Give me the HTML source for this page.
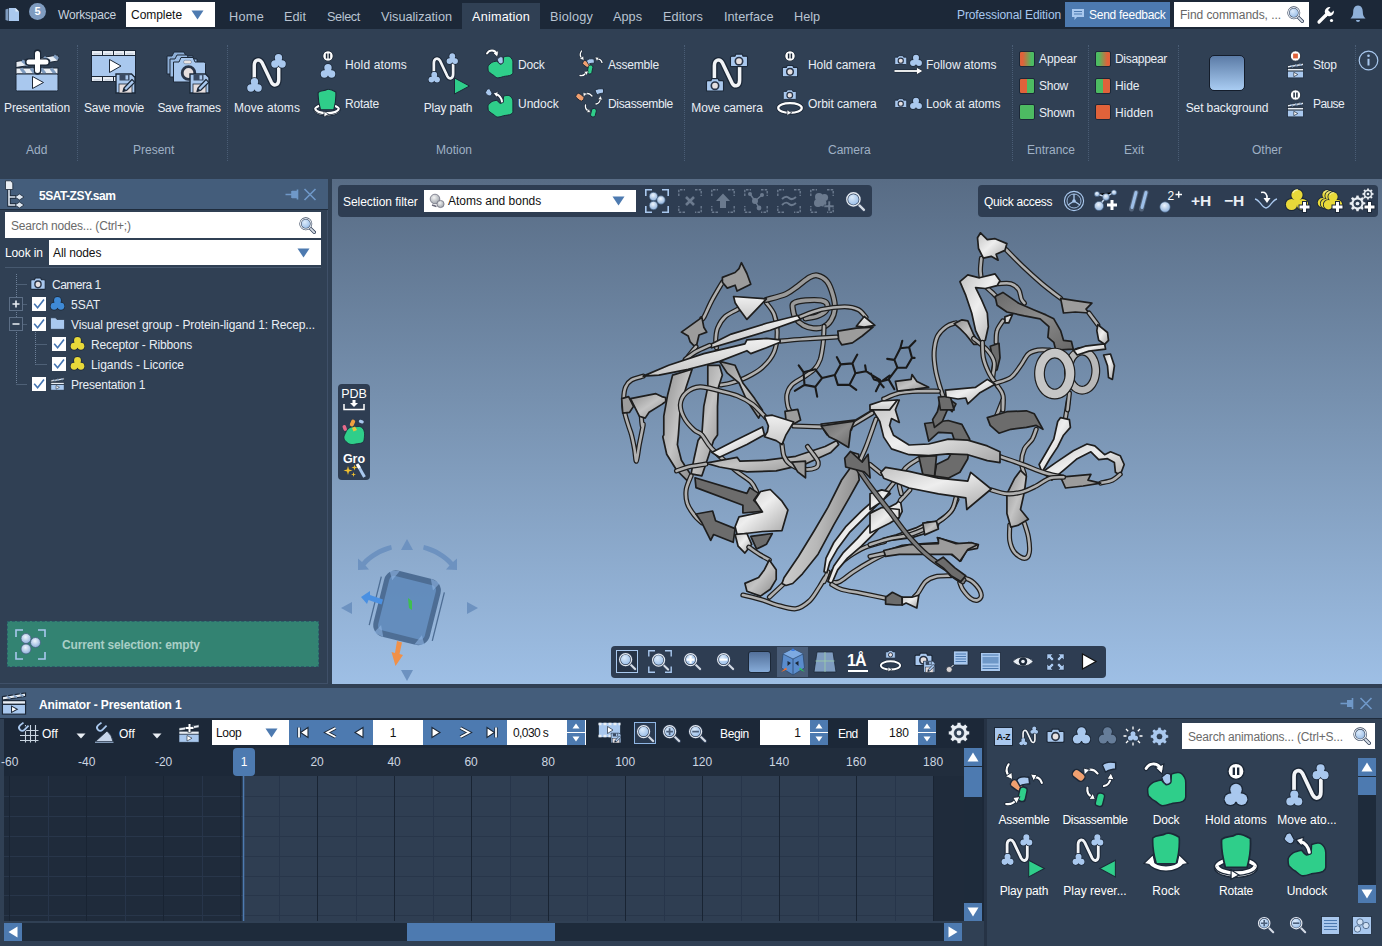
<!DOCTYPE html>
<html lang="en">
<head>
<meta charset="utf-8">
<title>SAMSON - 5SAT-ZSY.sam</title>
<style>
*{box-sizing:border-box;margin:0;padding:0}
html,body{width:1382px;height:946px;overflow:hidden;background:#304054}
body{position:relative;font-family:"Liberation Sans","DejaVu Sans",sans-serif;font-size:12px;color:#e9eef4;line-height:16px}
.a{position:absolute}
.t{position:absolute;white-space:nowrap;line-height:16px;height:16px}
.c{text-align:center}
.dim{color:#9fb0c4}
.b{font-weight:bold}
.dk{color:#111}
svg{position:absolute;overflow:visible}
.sep{position:absolute;width:0;border-left:1px dotted #4a5d75}
.wbox{position:absolute;background:#fff}
.mi{top:9px;font-size:12.7px;color:#b9c4d2}
.gl{top:142px}
.tb{background:#445d7b;border-bottom:1px solid #1f2c3d}
.bar{background:#2e3d52;border-radius:4px}
.sw{width:16px;height:16px;border-radius:2px;border:1px solid #1c2838}
</style>
</head>
<body>
<svg width="0" height="0" style="position:absolute">
<defs>
<linearGradient id="gbg" x1="0" y1="0" x2="0" y2="1"><stop offset="0" stop-color="#5b7ba6"/><stop offset="1" stop-color="#a9ccf2"/></linearGradient>
<linearGradient id="gap" x1="0" y1="0" x2="1" y2="0"><stop offset="0.15" stop-color="#e0623a"/><stop offset="0.85" stop-color="#4dbb62"/></linearGradient>
<linearGradient id="gdis" x1="0" y1="0" x2="1" y2="0"><stop offset="0.15" stop-color="#4dbb62"/><stop offset="0.85" stop-color="#e0623a"/></linearGradient>
<radialGradient id="glens" cx="0.4" cy="0.35" r="0.7"><stop offset="0" stop-color="#dcebfb"/><stop offset="1" stop-color="#8fb6e4"/></radialGradient>
<!-- atom trio 16x16 -->
<symbol id="trio" viewBox="0 0 16 16"><g fill="#1c2838" stroke="#1c2838" stroke-width="1.7" stroke-linejoin="round"><circle cx="8" cy="4.7" r="3.7"/><circle cx="4.4" cy="11" r="3.7"/><circle cx="11.600" cy="11" r="3.7"/><circle cx="8" cy="9" r="3.600"/></g><g fill="#a9c8ee"><circle cx="8" cy="4.7" r="3.7"/><circle cx="4.4" cy="11" r="3.7"/><circle cx="11.600" cy="11" r="3.7"/><circle cx="8" cy="9" r="3.600"/></g></symbol>
<symbol id="trioy" viewBox="0 0 16 16"><g fill="#1c2838" stroke="#1c2838" stroke-width="1.7" stroke-linejoin="round"><circle cx="8" cy="4.7" r="3.7"/><circle cx="4.4" cy="11" r="3.7"/><circle cx="11.600" cy="11" r="3.7"/><circle cx="8" cy="9" r="3.600"/></g><g fill="#e8d93a"><circle cx="8" cy="4.7" r="3.7"/><circle cx="4.4" cy="11" r="3.7"/><circle cx="11.600" cy="11" r="3.7"/><circle cx="8" cy="9" r="3.600"/></g></symbol>
<symbol id="triob" viewBox="0 0 16 16"><g fill="#1c2838" stroke="#1c2838" stroke-width="1.7" stroke-linejoin="round"><circle cx="8" cy="4.7" r="3.7"/><circle cx="4.4" cy="11" r="3.7"/><circle cx="11.600" cy="11" r="3.7"/><circle cx="8" cy="9" r="3.600"/></g><g fill="#3f8ad6"><circle cx="8" cy="4.7" r="3.7"/><circle cx="4.4" cy="11" r="3.7"/><circle cx="11.600" cy="11" r="3.7"/><circle cx="8" cy="9" r="3.600"/></g></symbol>
<!-- N path 24x30 -->
<symbol id="npath" viewBox="0 0 31 31"><path d="M4 27 V9 C4 3 9 2 11.5 6.5 L20 24.5 C22.5 29 27 27.5 27 22 V9" fill="none" stroke="#1c2838" stroke-width="5.6" stroke-linecap="round" stroke-linejoin="round"/><path d="M4 27 V9 C4 3 9 2 11.5 6.5 L20 24.5 C22.5 29 27 27.5 27 22 V9" fill="none" stroke="#f2f4f7" stroke-width="3.2" stroke-linecap="round" stroke-linejoin="round"/></symbol>
<!-- green blob 28x30 -->
<symbol id="blob" viewBox="0 0 27 24"><path d="M10 6 C7 6.5 5.5 7 4.3 7.8 C2 9.5 0.8 11 1 12.5 C1 14.5 1.2 15.5 1.5 16.3 C3 18 5 19.5 6.2 20 C8 21.5 9.5 23 10.9 22.9 C13 22.8 15 22 16.5 21.5 C19 21 22 21 24 20 C25.5 19 25.9 18 25.9 17.2 V7.8 C25.9 6 25.5 5 25 4.1 C24 2.5 22.5 1.2 21.2 1.2 C19.5 1 18 1.5 16.5 2.2 C16.5 4 16.3 6 16 7.8 C15 8.8 14 9.2 13.2 9.2 C12 8.5 11 7.5 10 6 Z" fill="#2fce8a" stroke="#1c2838" stroke-width="1"/></symbol>
<!-- rotate body (shield) 20x22 -->
<symbol id="shield" viewBox="0 0 20 22"><path d="M1.2 4 C4 1.5 7 3 10 1 C13 0 16 1.8 18.8 3.5 C19.2 9 18.5 15 16.8 21.2 H3.5 C1.8 15 0.8 9 1.2 4 Z" fill="#2fce8a" stroke="#1c2838" stroke-width="1.1"/></symbol>
<!-- camera 16x12 -->
<symbol id="cam" viewBox="0 0 16 12"><path d="M1.8 2.6 H4.6 L5.4 0.8 H10.6 L11.4 2.6 H14.2 A1 1 0 0 1 15.2 3.6 V10.4 A1 1 0 0 1 14.2 11.4 H1.8 A1 1 0 0 1 0.8 10.4 V3.6 A1 1 0 0 1 1.8 2.6 Z" fill="#a9c8ee" stroke="#1c2838" stroke-width="1"/><circle cx="8" cy="6.8" r="3.1" fill="#e6e0e0" stroke="#2a3548" stroke-width="1.4"/></symbol>
<!-- clapperboard 18x16 -->
<symbol id="clap" viewBox="0 0 18 16"><path d="M1 3.2 L17 0.6 V3 L1 5.6 Z" fill="#e9eef4" stroke="#1c2838" stroke-width="0.8"/><path d="M4 2.8 L6.5 4.6 M8.5 2 L11 3.9 M13 1.3 L15.5 3.2" stroke="#7f9cc0" stroke-width="1.3"/><rect x="1" y="6" width="16" height="2.6" fill="#e9eef4" stroke="#1c2838" stroke-width="0.8"/><rect x="1" y="8.6" width="16" height="6.8" fill="#a9c8ee" stroke="#1c2838" stroke-width="0.8"/><path d="M7.3 9.8 L11.3 12 L7.3 14.2 Z" fill="#fff" stroke="#1c2838" stroke-width="0.7"/></symbol>
<!-- magnifier 20x20 -->
<symbol id="mag" viewBox="0 0 20 20"><path d="M12.5 12.5 L18 18" stroke="#33425a" stroke-width="4" stroke-linecap="round"/><path d="M12.5 12.5 L18 18" stroke="#d6dde6" stroke-width="2.2" stroke-linecap="round"/><circle cx="8" cy="8" r="6.3" fill="url(#glens)" stroke="#33425a" stroke-width="2.6"/><circle cx="8" cy="8" r="6.3" fill="none" stroke="#e4eaf1" stroke-width="1.3"/></symbol>
<!-- pause circle 12x12 -->
<symbol id="pausec" viewBox="0 0 12 12"><circle cx="6" cy="6" r="5.2" fill="#fff" stroke="#1c2838" stroke-width="0.9"/><path d="M4.6 3.6 V8.4 M7.4 3.6 V8.4" stroke="#1c2838" stroke-width="1.5"/></symbol>
<symbol id="stopc" viewBox="0 0 12 12"><circle cx="6" cy="6" r="5.2" fill="#fff" stroke="#1c2838" stroke-width="0.9"/><rect x="3.6" y="3.6" width="4.8" height="4.8" fill="#e0623a"/></symbol>
<!-- orbit ring 28x14 -->
<symbol id="ring" viewBox="0 0 28 14"><ellipse cx="14" cy="6.5" rx="11.8" ry="4.8" fill="none" stroke="#1c2838" stroke-width="3.8"/><ellipse cx="14" cy="6.5" rx="11.8" ry="4.8" fill="none" stroke="#fff" stroke-width="2.2"/><path d="M11 8.3 L15.8 11.3 L11 14 Z" fill="#fff" stroke="#1c2838" stroke-width="0.7"/></symbol>
<!-- small curved arrow (white) 12x10 pointing right-down -->
<symbol id="carr" viewBox="0 0 12 10"><path d="M1 3 C4 0.5 8 1.5 9 6" fill="none" stroke="#1c2838" stroke-width="2.6" stroke-linecap="round"/><path d="M6 5.2 L9.6 9.4 L11.8 4.2 Z" fill="#fff" stroke="#1c2838" stroke-width="0.8"/><path d="M1 3 C4 0.5 8 1.5 9 6" fill="none" stroke="#fff" stroke-width="1.4" stroke-linecap="round"/></symbol>
<!-- small blue lump -->
<symbol id="lump" viewBox="0 0 8 9"><path d="M1 3.2 L4 0.8 C5.5 0.6 6.5 1 7 1.6 L7.3 6.5 C6.5 8 5 8.4 4 8.2 C2.5 7.5 1.5 6 1 3.2 Z" fill="#a9c8ee" stroke="#1c2838" stroke-width="0.8"/></symbol>
<!-- gear 20x20 -->
<symbol id="gear" viewBox="0 0 20 20"><g fill="#e9eef4" stroke="#1c2838" stroke-width="0.6"><path d="M8.4 0.8 H11.6 L12.1 3.3 L13.9 4.05 L16 2.6 L18.3 4.9 L16.85 7 L17.6 8.8 L20.1 9.3 V12.5 L17.6 13 L16.85 14.8 L18.3 16.9 L16 19.2 L13.9 17.75 L12.1 18.5 L11.6 21 H8.4 L7.9 18.5 L6.1 17.75 L4 19.2 L1.7 16.9 L3.15 14.8 L2.4 13 L-0.1 12.5 V9.3 L2.4 8.8 L3.15 7 L1.7 4.9 L4 2.6 L6.1 4.05 L7.9 3.3 Z" transform="translate(0.5,-0.4) scale(0.95)"/></g><circle cx="10" cy="10" r="4.4" fill="#304054" stroke="#1c2838" stroke-width="0.5"/><circle cx="10" cy="10" r="2.2" fill="#e9eef4"/></symbol>
<!-- floppy + pencil 21x21 -->
<symbol id="floppy" viewBox="0 0 21 21"><path d="M1 1 H16.5 L20 4.5 V20 H1 Z" fill="#a9c8ee" stroke="#1c2838" stroke-width="1.4"/><rect x="4.5" y="1.5" width="10" height="6" fill="#3a4a62"/><rect x="10.5" y="2.3" width="2.6" height="4.2" fill="#a9c8ee"/><rect x="4" y="11" width="13" height="9" fill="#e6dede" stroke="#1c2838" stroke-width="0.8"/><path d="M8 18.5 L9 15 L17 6.5 L19.8 9.3 L11.5 17.5 Z" fill="#a9c8ee" stroke="#1c2838" stroke-width="1.2" stroke-linejoin="round"/><path d="M8 18.5 L9 15 L11.5 17.5 Z" fill="#1c2838"/></symbol>
<!-- assemble 28x29 -->
<symbol id="asm" viewBox="0 0 28 29"><g stroke="#1c2838" stroke-width="0.9"><rect x="5.5" y="12.5" width="8" height="5" rx="2.2" fill="#f0a070" transform="rotate(35 9.5 15)"/><path d="M9.5 12 C10.5 9.5 14 9.5 17 10 L17.5 14 C15 14.5 13 14 11.5 15.5 Z" fill="#a9c8ee"/><rect x="10.8" y="16" width="4.6" height="9" rx="2" fill="#2fce8a" transform="rotate(12 13 20.5)"/></g><g fill="none" stroke="#1c2838" stroke-width="2.4" stroke-linecap="round"><path d="M4.5 2 C2.5 5 3 7.5 5 9.5"/><path d="M20 10.5 C22 9.5 24 10.5 25 13.5"/><path d="M3 26.5 C5.5 27 7.5 26 9 24"/></g><g fill="none" stroke="#fff" stroke-width="1.3" stroke-linecap="round"><path d="M4.5 2 C2.5 5 3 7.5 5 9.5"/><path d="M20 10.5 C22 9.5 24 10.5 25 13.5"/><path d="M3 26.5 C5.5 27 7.5 26 9 24"/></g><g fill="#fff" stroke="#1c2838" stroke-width="0.6"><path d="M2.5 9.5 L7 11.5 L6.5 7 Z"/><path d="M18 8 L22 8.5 L20 12.5 Z"/><path d="M7 22.5 L11.5 22 L9.5 26.5 Z"/></g></symbol>
<!-- disassemble 30x30 -->
<symbol id="dasm" viewBox="0 0 30 30"><g stroke="#1c2838" stroke-width="0.9"><rect x="0.8" y="6.5" width="8.5" height="5.4" rx="2.3" fill="#f0a070" transform="rotate(38 5 9)"/><path d="M20 2.5 C22 0.5 25.5 0.5 28.5 1 L28.5 5 C26 5.5 24 5.5 22 7 Z" fill="#a9c8ee"/><rect x="16" y="20.5" width="4.8" height="8.5" rx="2" fill="#2fce8a" transform="rotate(14 18.5 25)"/></g><g fill="none" stroke="#1c2838" stroke-width="2.4" stroke-linecap="round"><path d="M17 8 C14.5 5 12 5 9.5 6.5"/><path d="M21 16 C24 15.5 25 13.5 25.5 10.5"/><path d="M10.5 17 C10 20 11.5 22 13.5 23"/></g><g fill="none" stroke="#fff" stroke-width="1.3" stroke-linecap="round"><path d="M17 8 C14.5 5 12 5 9.5 6.5"/><path d="M21 16 C24 15.5 25 13.5 25.5 10.5"/><path d="M10.5 17 C10 20 11.5 22 13.5 23"/></g><g fill="#fff" stroke="#1c2838" stroke-width="0.6"><path d="M8 4.5 L8.5 9 L12 5.5 Z"/><path d="M23 11.5 L25.5 7.5 L27.5 12 Z"/><path d="M11.5 24.5 L15.5 24.5 L14 20.5 Z"/></g></symbol>
<radialGradient id="gball" cx="0.45" cy="0.35" r="0.7"><stop offset="0" stop-color="#eef5fd"/><stop offset="1" stop-color="#86abd8"/></radialGradient>
<symbol id="chk" viewBox="0 0 14 14"><path d="M2.2 6.8 L5.6 10.8 L12 2.6" fill="none" stroke="#4173b1" stroke-width="1.6"/></symbol>
<radialGradient id="ggray" cx="0.4" cy="0.35" r="0.7"><stop offset="0" stop-color="#f4f4f4"/><stop offset="1" stop-color="#9aa0a8"/></radialGradient>
<symbol id="dbr" viewBox="0 0 24 24"><path d="M0.8 7 V0.8 H7 M17 0.8 H23.2 V7 M23.2 17 V23.2 H17 M7 23.2 H0.8 V17" fill="none" stroke="#6b7a8e" stroke-width="1.4" stroke-dasharray="2.5 1.2"/></symbol>
<symbol id="ytrio" viewBox="0 0 24 24"><g stroke="#1c2838" stroke-width="2" stroke-linejoin="round"><circle cx="12" cy="7" r="5.6"/><circle cx="6.5" cy="16.5" r="5.6"/><circle cx="17.5" cy="16.5" r="5.6"/></g><g fill="#e8d93a"><circle cx="12" cy="7" r="5.6"/><circle cx="6.5" cy="16.5" r="5.6"/><circle cx="17.5" cy="16.5" r="5.6"/><path d="M12 7 L6.5 16.5 H17.5 Z"/></g><path d="M8 5 a5 5 0 0 1 5 -3" stroke="#f6f0a0" stroke-width="1.2" fill="none"/></symbol>
<symbol id="gearb" viewBox="0 0 20 20"><g fill="#a9c8ee" stroke="#1c2838" stroke-width="0.6"><path d="M8.4 0.8 H11.6 L12.1 3.3 L13.9 4.05 L16 2.6 L18.3 4.9 L16.85 7 L17.6 8.8 L20.1 9.3 V12.5 L17.6 13 L16.85 14.8 L18.3 16.9 L16 19.2 L13.9 17.75 L12.1 18.5 L11.6 21 H8.4 L7.9 18.5 L6.1 17.75 L4 19.2 L1.7 16.9 L3.15 14.8 L2.4 13 L-0.1 12.5 V9.3 L2.4 8.8 L3.15 7 L1.7 4.9 L4 2.6 L6.1 4.05 L7.9 3.3 Z" transform="translate(0.5,-0.4) scale(0.95)"/></g><circle cx="10" cy="10" r="2.700" fill="#304054" stroke="#1c2838" stroke-width="0.500"/></symbol>

<symbol id="icoMove" viewBox="0 0 42 40"><use href="#npath" x="4" y="3" width="33" height="33"/><use href="#trio" x="24.5" y="0" width="16" height="16"/><use href="#trio" x="0.5" y="24" width="16" height="16"/></symbol>
<symbol id="icoHold" viewBox="0 0 18 29"><use href="#pausec" x="3" y="0" width="12" height="12"/><use href="#trio" x="1" y="13" width="16" height="16"/></symbol>
<symbol id="icoRotate" viewBox="0 0 28 30"><use href="#ring" x="0" y="15" width="28" height="14"/><use href="#shield" x="4" y="0.5" width="20" height="22"/><path d="M2.3 21 A11.8 4.8 0 0 0 25.7 21" fill="none" stroke="#1c2838" stroke-width="3.8"/><path d="M2.3 21 A11.8 4.8 0 0 0 25.7 21" fill="none" stroke="#fff" stroke-width="2.2"/><path d="M11 23.3 L15.8 26.3 L11 29 Z" fill="#fff" stroke="#1c2838" stroke-width="0.7"/></symbol>
<symbol id="icoPlay" viewBox="0 0 44 43"><use href="#npath" x="2.5" y="3" width="26" height="27"/><use href="#trio" x="18" y="0.5" width="12.5" height="12.5"/><use href="#trio" x="0" y="19" width="12.5" height="12.5"/><path d="M26.5 26 L41.5 34 L26.5 42 Z" fill="#2fce8a" stroke="#1c2838" stroke-width="1"/></symbol>
<symbol id="icoPlayR" viewBox="0 0 44 43"><use href="#npath" x="2.5" y="3" width="26" height="27"/><use href="#trio" x="18" y="0.5" width="12.5" height="12.5"/><use href="#trio" x="0" y="19" width="12.5" height="12.5"/><path d="M41.5 26 L26.5 34 L41.5 42 Z" fill="#2fce8a" stroke="#1c2838" stroke-width="1"/></symbol>
<symbol id="icoDock" viewBox="0 0 30 32"><use href="#blob" x="2" y="7" width="27" height="24"/><use href="#lump" x="11.3" y="8" width="7.6" height="8.6"/><path d="M2 5.5 C4.5 1.5 10 1.5 11.6 6.5" fill="none" stroke="#1c2838" stroke-width="3.4" stroke-linecap="round"/><path d="M8 5 L12.5 9.2 L13.6 2.6 Z" fill="#fff" stroke="#1c2838" stroke-width="0.8"/><path d="M2 5.5 C4.5 1.5 10 1.5 11.6 6" fill="none" stroke="#fff" stroke-width="1.9" stroke-linecap="round"/></symbol>
<symbol id="icoUndock" viewBox="0 0 31 32"><use href="#blob" x="3" y="7.2" width="27" height="24"/><use href="#lump" x="0.6" y="1.4" width="7.6" height="8.6" transform="rotate(-25 4.4 5.7)"/><path d="M18 14.5 C17.5 11 15 8 11.5 7.6" fill="none" stroke="#1c2838" stroke-width="3.6" stroke-linecap="round"/><path d="M9.2 6.2 L14.2 4.6 L13 10.6 Z" fill="#fff" stroke="#1c2838" stroke-width="0.8"/><path d="M18 14.5 C17.5 11 15 8 12.5 7.6" fill="none" stroke="#fff" stroke-width="2" stroke-linecap="round"/></symbol>

</defs>
</svg>

<!-- ===== MENU BAR ===== -->
<div class="a" id="menubar" style="left:0;top:0;width:1382px;height:30px;background:#1c2838"></div>
<div class="a" style="left:462px;top:3px;width:78px;height:27px;background:#304054"></div>
<svg style="left:5px;top:7px" width="15" height="15" viewBox="0 0 15 15"><path d="M0.5 2.5 L3.5 1.5 V14 L0.5 13 Z" fill="#7f9cc0"/><path d="M4 1 H10.5 L14 4.5 V14 H4 Z" fill="#a9c8ee"/><path d="M10.5 1 V4.5 H14 Z" fill="#dfeaf7"/></svg>
<div class="a" style="left:29px;top:2.5px;width:17px;height:17px;border-radius:9px;background:#7f9cc0"></div>
<div class="t c b" style="left:29px;top:3px;width:17px;font-size:11px;color:#fff">5</div>
<div class="t" style="left:58px;top:7px;color:#c9d3df;letter-spacing:-0.20px">Workspace</div>
<div class="wbox" style="left:126px;top:2px;width:89px;height:25px"></div>
<div class="t dk" style="left:131px;top:7px;letter-spacing:-0.04px">Complete</div>
<svg style="left:191px;top:10px" width="13" height="10" viewBox="0 0 13 10"><path d="M0.5 0.5 H12.5 L6.5 9.5 Z" fill="#4d7ab0"/></svg>
<div class="t mi" style="left:229px;letter-spacing:0.29px">Home</div>
<div class="t mi" style="left:284px;letter-spacing:0.03px">Edit</div>
<div class="t mi" style="left:327px;letter-spacing:-0.38px">Select</div>
<div class="t mi" style="left:381px;letter-spacing:-0.00px">Visualization</div>
<div class="t mi" style="left:472px;color:#fff;letter-spacing:0.18px">Animation</div>
<div class="t mi" style="left:550px;letter-spacing:0.20px">Biology</div>
<div class="t mi" style="left:613px;letter-spacing:0.02px">Apps</div>
<div class="t mi" style="left:663px;letter-spacing:0.07px">Editors</div>
<div class="t mi" style="left:724px;letter-spacing:0.01px">Interface</div>
<div class="t mi" style="left:794px;letter-spacing:-0.02px">Help</div>
<div class="t" style="left:957px;top:7px;color:#a9c8f0;letter-spacing:-0.10px">Professional Edition</div>
<div class="a" style="left:1065px;top:2px;width:105px;height:25px;background:#4d7ab0"></div>
<svg style="left:1071px;top:8px" width="14" height="13" viewBox="0 0 14 13"><path d="M1 1 H13 V9 H6 L3.5 12 V9 H1 Z" fill="#a9c8ee"/><path d="M3 3.5 H11 M3 6 H11" stroke="#4d7ab0" stroke-width="1"/></svg>
<div class="t" style="left:1089px;top:7px;color:#fff;letter-spacing:-0.27px">Send feedback</div>
<div class="wbox" style="left:1174px;top:2px;width:135px;height:25px"></div>
<div class="t" style="left:1180px;top:7px;color:#666;letter-spacing:-0.06px">Find commands, ...</div>
<svg style="left:1287px;top:5.5px" width="17" height="17" viewBox="0 0 20 20"><use href="#mag"/></svg>
<svg style="left:1316px;top:5px" width="20" height="20" viewBox="0 0 20 20"><path d="M3 17 L10 10" stroke="#fff" stroke-width="3.2" stroke-linecap="round"/><path d="M14.5 2.2 A4.6 4.6 0 1 0 17.8 5.5 L15 8 L12 5 Z" fill="#fff"/><circle cx="15.5" cy="15.5" r="1.6" fill="#fff"/></svg>
<svg style="left:1349px;top:4px" width="18" height="20" viewBox="0 0 18 20"><path d="M9 1.5 C5.5 1.5 4.2 4.5 4.2 8 C4.2 11.5 3 13 1.5 14.5 H16.5 C15 13 13.8 11.5 13.8 8 C13.8 4.5 12.5 1.5 9 1.5 Z" fill="#8fb0d8"/><path d="M7 16 A2 2 0 0 0 11 16 Z" fill="#8fb0d8"/></svg>


<!-- ===== RIBBON ===== -->
<div class="a" id="ribbon" style="left:0;top:29px;width:1382px;height:150px;background:#304054"></div>
<div class="sep" style="left:77px;top:45px;height:116px"></div>
<div class="sep" style="left:227px;top:45px;height:116px"></div>
<div class="sep" style="left:684px;top:45px;height:116px"></div>
<div class="sep" style="left:1012px;top:45px;height:116px"></div>
<div class="sep" style="left:1088px;top:45px;height:116px"></div>
<div class="sep" style="left:1178px;top:45px;height:116px"></div>
<div class="sep" style="left:1355px;top:45px;height:116px"></div>
<!-- group labels -->
<div class="t dim gl" style="left:26px">Add</div>
<div class="t dim gl" style="left:133px">Present</div>
<div class="t dim gl" style="left:436px">Motion</div>
<div class="t dim gl" style="left:828px">Camera</div>
<div class="t dim gl" style="left:1027px">Entrance</div>
<div class="t dim gl" style="left:1124px">Exit</div>
<div class="t dim gl" style="left:1252px">Other</div>

<!-- Presentation -->
<svg style="left:15px;top:52px" width="44" height="40" viewBox="0 0 44 40"><path d="M1 9.5 L43 3 V9 L1 15.5 Z" fill="#e9eef4" stroke="#1c2838" stroke-width="1"/><path d="M7 8.6 L13 13.4 M18 6.9 L24 11.7 M29 5.2 L35 10 M39 3.7 L43 7" stroke="#7f9cc0" stroke-width="3"/><rect x="1" y="16" width="42" height="6" fill="#e9eef4" stroke="#1c2838" stroke-width="1"/><path d="M6 16.5 L10 21.5 M16 16.5 L20 21.5 M26 16.5 L30 21.5 M36 16.5 L40 21.5" stroke="#7f9cc0" stroke-width="3"/><rect x="1" y="22" width="42" height="17" rx="1.5" fill="#a9c8ee" stroke="#1c2838" stroke-width="1"/><path d="M17.5 24.5 L28.5 30.5 L17.5 36.5 Z" fill="#fff" stroke="#1c2838" stroke-width="1"/><path d="M22.5 1 V19 M13.5 10 H31.5" stroke="#1c2838" stroke-width="7.4" stroke-linecap="round"/><path d="M22.5 1.5 V18.5 M14 10 H31" stroke="#fff" stroke-width="5" stroke-linecap="round"/></svg>
<div class="t c" style="left:0;width:74px;top:100px;letter-spacing:-0.12px">Presentation</div>

<!-- Save movie -->
<svg style="left:91px;top:50px" width="46" height="45" viewBox="0 0 46 45"><rect x="0.5" y="0.5" width="44" height="31" fill="#a9c8ee" stroke="#1c2838" stroke-width="1"/><rect x="0.5" y="0.5" width="44" height="5" fill="#e9eef4" stroke="#1c2838" stroke-width="1"/><rect x="0.5" y="26.5" width="44" height="5" fill="#e9eef4" stroke="#1c2838" stroke-width="1"/><path d="M11.500 0.500 V5.500 M22.500 0.500 V5.500 M33.500 0.500 V5.500 M11.500 26.500 V31.500 M22.500 26.500 V31.500" stroke="#1c2838" stroke-width="1"/><path d="M2.500 3.800 H9.500 M13.500 3.800 H20.500 M24.500 3.800 H31.500 M35.500 3.800 H42.500 M2.500 29.800 H9.500 M13.500 29.800 H20.500" stroke="#c5d0de" stroke-width="1.2"/><path d="M18.5 9.5 L30 16 L18.5 22.5 Z" fill="#fff" stroke="#1c2838" stroke-width="1"/><use href="#floppy" x="24" y="23" width="21" height="21"/></svg>
<div class="t c" style="left:79px;width:70px;top:100px;letter-spacing:-0.27px">Save movie</div>

<!-- Save frames -->
<svg style="left:165px;top:50px" width="46" height="45" viewBox="0 0 46 45"><g fill="#8daed6" stroke="#1c2838" stroke-width="1"><path d="M2 6 H7 L9 2 H19 L21 6 H28 V24 H2 Z"/><path d="M5 9 H10 L12 5 H22 L24 9 H32 V27 H5 Z" fill="#9bbce4"/><path d="M8.5 12 H14 L16 7.5 H28 L30 12 H39 A1.5 1.5 0 0 1 40.5 13.5 V32 H8.5 Z" fill="#a9c8ee"/></g><rect x="18.500" y="10.300" width="8" height="3.400" rx="1.700" fill="#e9e4e4" stroke="#5a6f8c" stroke-width="0.500"/><circle cx="23.500" cy="23" r="6.300" fill="#e6dede" stroke="#2a3548" stroke-width="2.800"/><use href="#floppy" x="24" y="23" width="21" height="21"/></svg>
<div class="t c" style="left:152px;width:74px;top:100px;letter-spacing:-0.40px">Save frames</div>

<!-- Move atoms -->
<svg style="left:246px;top:53px" width="42" height="40" viewBox="0 0 42 40"><use href="#icoMove"/></svg>
<div class="t c" style="left:230px;width:74px;top:100px;letter-spacing:0.06px">Move atoms</div>

<!-- Hold atoms -->
<svg style="left:319px;top:50px" width="18" height="29" viewBox="0 0 18 29"><use href="#icoHold"/></svg>
<div class="t" style="left:345px;top:57px;letter-spacing:0.13px">Hold atoms</div>
<!-- Rotate -->
<svg style="left:313px;top:88px" width="28" height="30" viewBox="0 0 28 30"><use href="#icoRotate"/></svg>
<div class="t" style="left:345px;top:96px;letter-spacing:-0.23px">Rotate</div>

<!-- Play path -->
<svg style="left:428px;top:52px" width="44" height="43" viewBox="0 0 44 43"><use href="#icoPlay"/></svg>
<div class="t c" style="left:413px;width:70px;top:100px;letter-spacing:-0.17px">Play path</div>

<!-- Dock -->
<svg style="left:485px;top:48px" width="30" height="32" viewBox="0 0 30 32"><use href="#icoDock"/></svg>
<div class="t" style="left:518px;top:57px;letter-spacing:-0.21px">Dock</div>
<!-- Undock -->
<svg style="left:484px;top:87px" width="31" height="32" viewBox="0 0 31 32"><use href="#icoUndock"/></svg>
<div class="t" style="left:518px;top:96px;letter-spacing:0.01px">Undock</div>

<!-- Assemble -->
<svg style="left:577px;top:49px" width="28" height="29" viewBox="0 0 28 29"><use href="#asm"/></svg>
<div class="t" style="left:608px;top:57px;letter-spacing:-0.21px">Assemble</div>
<!-- Disassemble -->
<svg style="left:575px;top:88px" width="30" height="30" viewBox="0 0 30 30"><use href="#dasm"/></svg>
<div class="t" style="left:608px;top:96px;letter-spacing:-0.34px">Disassemble</div>

<!-- Move camera -->
<svg style="left:705px;top:53px" width="44" height="40" viewBox="0 0 44 40"><use href="#npath" x="5" y="3" width="34" height="34"/><use href="#cam" x="24.5" y="0" width="19" height="14.5"/><use href="#cam" x="0.5" y="24.5" width="19" height="14.5"/></svg>
<div class="t c" style="left:688px;width:78px;top:100px;letter-spacing:-0.11px">Move camera</div>

<!-- Hold camera -->
<svg style="left:781px;top:50px" width="18" height="28" viewBox="0 0 18 28"><use href="#pausec" x="3" y="0" width="12" height="12"/><use href="#cam" x="0.5" y="14.5" width="17" height="13"/></svg>
<div class="t" style="left:808px;top:57px;letter-spacing:-0.05px">Hold camera</div>
<!-- Orbit camera -->
<svg style="left:776px;top:89px" width="28" height="28" viewBox="0 0 28 28"><use href="#cam" x="6.5" y="0" width="14.5" height="11"/><use href="#ring" x="0" y="12.5" width="28" height="14"/></svg>
<div class="t" style="left:808px;top:96px;letter-spacing:-0.07px">Orbit camera</div>

<!-- Follow atoms -->
<svg style="left:894px;top:54px" width="30" height="22" viewBox="0 0 30 22"><use href="#cam" x="0" y="1" width="13.5" height="10"/><use href="#trio" x="15.5" y="0" width="13" height="13"/><path d="M0.5 17 H24" stroke="#1c2838" stroke-width="3.2"/><path d="M22.5 13.2 L29 17 L22.5 20.8 Z" fill="#fff" stroke="#1c2838" stroke-width="0.8"/><path d="M0.5 17 H24" stroke="#fff" stroke-width="1.8"/></svg>
<div class="t" style="left:926px;top:57px;letter-spacing:-0.02px">Follow atoms</div>
<!-- Look at atoms -->
<svg style="left:894px;top:97px" width="30" height="14" viewBox="0 0 30 14"><use href="#cam" x="0" y="1" width="13.5" height="10"/><use href="#trio" x="15.5" y="0" width="13" height="13"/></svg>
<div class="t" style="left:926px;top:96px;letter-spacing:-0.07px">Look at atoms</div>

<!-- Entrance -->
<div class="a sw" style="left:1019px;top:51px;background:linear-gradient(90deg,#e0623a 20%,#4dbb62 80%)"></div>
<div class="t" style="left:1039px;top:51px;letter-spacing:-0.12px">Appear</div>
<div class="a sw" style="left:1019px;top:78px;background:linear-gradient(90deg,#e0623a 50%,#4dbb62 50%)"></div>
<div class="t" style="left:1039px;top:78px;letter-spacing:-0.26px">Show</div>
<div class="a sw" style="left:1019px;top:104px;background:#4dbb62"></div>
<div class="t" style="left:1039px;top:105px;letter-spacing:-0.24px">Shown</div>
<!-- Exit -->
<div class="a sw" style="left:1095px;top:51px;background:linear-gradient(90deg,#4dbb62 20%,#e0623a 80%)"></div>
<div class="t" style="left:1115px;top:51px;letter-spacing:-0.30px">Disappear</div>
<div class="a sw" style="left:1095px;top:78px;background:linear-gradient(90deg,#4dbb62 50%,#e0623a 50%)"></div>
<div class="t" style="left:1115px;top:78px;letter-spacing:-0.05px">Hide</div>
<div class="a sw" style="left:1095px;top:104px;background:#e0623a"></div>
<div class="t" style="left:1115px;top:105px;letter-spacing:0.04px">Hidden</div>

<!-- Other -->
<div class="a" style="left:1209px;top:55px;width:36px;height:36px;border-radius:5px;border:1px solid #141d2b;background:linear-gradient(180deg,#5b7ba6,#a9ccf2)"></div>
<div class="t c" style="left:1181px;width:92px;top:100px;letter-spacing:-0.10px">Set background</div>
<svg style="left:1286px;top:50px" width="19" height="29" viewBox="0 0 19 29"><use href="#stopc" x="3.5" y="0" width="12" height="12"/><use href="#clap" x="0.5" y="12.5" width="18" height="16"/></svg>
<div class="t" style="left:1313px;top:57px;letter-spacing:-0.25px">Stop</div>
<svg style="left:1286px;top:89px" width="19" height="29" viewBox="0 0 19 29"><use href="#pausec" x="3.5" y="0" width="12" height="12"/><use href="#clap" x="0.5" y="12.5" width="18" height="16"/></svg>
<div class="t" style="left:1313px;top:96px;letter-spacing:-0.60px">Pause</div>
<svg style="left:1358px;top:50px" width="21" height="21" viewBox="0 0 21 21"><circle cx="10.5" cy="10.5" r="9.3" fill="none" stroke="#a9c8ee" stroke-width="1.2"/><circle cx="10.5" cy="5.8" r="1.3" fill="#a9c8ee"/><path d="M10.5 8.8 V15.5" stroke="#a9c8ee" stroke-width="2"/></svg>


<!-- ===== LEFT PANEL ===== -->
<div class="a" style="left:0;top:179px;width:328px;height:505px;background:#304054;border-right:1px solid #3f5068;border-bottom:1px solid #3f5068"></div>
<div class="a tb" style="left:0;top:179px;width:328px;height:31px"></div>
<!-- doc tree icon -->
<svg style="left:3px;top:180px" width="22" height="28" viewBox="0 0 22 28"><path d="M6 9 V25 H13 M6 17 H13" fill="none" stroke="#1c2838" stroke-width="3.4"/><path d="M6 9 V25 H13 M6 17 H13" fill="none" stroke="#dfe8f2" stroke-width="1.6"/><path d="M2.5 0.8 H7.5 L9.8 3 V9.5 H2.5 Z" fill="#e9eef4" stroke="#1c2838" stroke-width="0.8"/><path d="M12 17 L16.5 14 L21 17 L16.5 20 Z M12 25 L16.5 22 L21 25 L16.5 28 Z" fill="#dfe8f2" stroke="#1c2838" stroke-width="0.8"/></svg>
<div class="t b" style="left:39px;top:188px;color:#fff;letter-spacing:-0.51px">5SAT-ZSY.sam</div>
<svg style="left:285px;top:188px" width="32" height="14" viewBox="0 0 32 14"><path d="M0.5 6.5 H7 M7 3 V10 M7 3.5 H12.5 V1.5 V11.5 V9.5 H7" fill="none" stroke="#6f98c8" stroke-width="1.6"/><rect x="7" y="3" width="5.5" height="7" fill="#6f98c8"/><path d="M19.5 1 L30.5 12 M30.5 1 L19.5 12" stroke="#6f98c8" stroke-width="1.6"/></svg>
<div class="wbox" style="left:5px;top:212px;width:316px;height:26px"></div>
<div class="t" style="left:11px;top:218px;color:#6a6a6a;letter-spacing:-0.19px">Search nodes... (Ctrl+;)</div>
<svg style="left:299px;top:216.5px" width="17" height="17" viewBox="0 0 20 20"><use href="#mag"/></svg>
<div class="t" style="left:5px;top:245px;color:#fff;letter-spacing:-0.13px">Look in</div>
<div class="wbox" style="left:49px;top:240px;width:272px;height:25px"></div>
<div class="t dk" style="left:53px;top:245px;letter-spacing:-0.12px">All nodes</div>
<svg style="left:297px;top:248px" width="13" height="10" viewBox="0 0 13 10"><path d="M0.5 0.5 H12.5 L6.5 9.5 Z" fill="#4d7ab0"/></svg>
<div class="a" style="left:5px;top:267px;width:316px;height:1px;background:#47596f"></div>
<!-- tree lines -->
<svg style="left:0px;top:269px" width="60" height="125" viewBox="0 0 60 125"><path d="M16.5 5 V115 M16.5 15.5 H27 M16.5 35.5 H27 M16.5 55.5 H27 M16.5 115.5 H27 M35.5 63 V95.5 M35.5 75.5 H47 M35.5 95.5 H47" fill="none" stroke="#6d8098" stroke-width="1" stroke-dasharray="1 1"/><rect x="9.500" y="28.500" width="13" height="13" fill="#304054" stroke="#5d6f86"/><rect x="9.500" y="48.500" width="13" height="13" fill="#304054" stroke="#5d6f86"/><path d="M12.500 35 H19.500 M16 31.500 V38.500 M12.500 55 H19.500" stroke="#e9eef4" stroke-width="1.600"/></svg>
<!-- rows -->
<svg style="left:30px;top:276.5px" width="16" height="13" viewBox="0 0 16 12" preserveAspectRatio="none"><use href="#cam"/></svg>
<div class="t" style="left:52px;top:277px;letter-spacing:-0.50px">Camera 1</div>
<svg style="left:32px;top:297px" width="14" height="14" viewBox="0 0 14 14"><rect width="14" height="14" fill="#fff"/><path d="M2.2 6.8 L5.6 10.8 L12 2.6" fill="none" stroke="#4173b1" stroke-width="1.6"/></svg>
<svg style="left:50px;top:296px" width="15" height="15"><use href="#triob" width="15" height="15"/></svg>
<div class="t" style="left:71px;top:297px">5SAT</div>
<svg style="left:32px;top:317px" width="14" height="14" viewBox="0 0 14 14"><rect width="14" height="14" fill="#fff"/><path d="M2.2 6.8 L5.6 10.8 L12 2.6" fill="none" stroke="#4173b1" stroke-width="1.6"/></svg>
<svg style="left:50px;top:317px" width="15" height="13" viewBox="0 0 15 13"><path d="M0.5 0.8 H5.5 L7 2.5 H14.5 V12.3 H0.5 Z" fill="#a9c8ee" stroke="#1c2838" stroke-width="0.6"/></svg>
<div class="t" style="left:71px;top:317px;letter-spacing:-0.11px">Visual preset group - Protein-ligand 1: Recep...</div>
<svg style="left:52px;top:337px" width="14" height="14" viewBox="0 0 14 14"><rect width="14" height="14" fill="#fff"/><path d="M2.2 6.8 L5.6 10.8 L12 2.6" fill="none" stroke="#4173b1" stroke-width="1.6"/></svg>
<svg style="left:70px;top:336px" width="15" height="15"><use href="#trioy" width="15" height="15"/></svg>
<div class="t" style="left:91px;top:337px;letter-spacing:-0.13px">Receptor - Ribbons</div>
<svg style="left:52px;top:357px" width="14" height="14" viewBox="0 0 14 14"><rect width="14" height="14" fill="#fff"/><path d="M2.2 6.8 L5.6 10.8 L12 2.6" fill="none" stroke="#4173b1" stroke-width="1.6"/></svg>
<svg style="left:70px;top:356px" width="15" height="15"><use href="#trioy" width="15" height="15"/></svg>
<div class="t" style="left:91px;top:357px;letter-spacing:-0.06px">Ligands - Licorice</div>
<svg style="left:32px;top:377px" width="14" height="14" viewBox="0 0 14 14"><rect width="14" height="14" fill="#fff"/><path d="M2.2 6.8 L5.6 10.8 L12 2.6" fill="none" stroke="#4173b1" stroke-width="1.6"/></svg>
<svg style="left:50px;top:377px" width="15" height="14" viewBox="0 0 18 16"><use href="#clap"/></svg>
<div class="t" style="left:71px;top:377px;letter-spacing:-0.22px">Presentation 1</div>
<!-- selection box -->
<div class="a" style="left:7px;top:621px;width:312px;height:46px;background:#338372;border:1px dashed #2c5f6a"></div>
<svg style="left:15px;top:629px" width="31" height="31" viewBox="0 0 31 31"><path d="M1 8 V1 H8 M23 1 H30 V8 M30 23 V30 H23 M8 30 H1 V23" fill="none" stroke="#a9c8ee" stroke-width="1.6"/><g stroke="#45607f" stroke-width="0.8"><circle cx="11" cy="9.5" r="5" fill="url(#gball)"/><circle cx="20.5" cy="13.5" r="5" fill="url(#gball)"/><circle cx="11" cy="20" r="5" fill="url(#gball)"/></g></svg>
<div class="t b" style="left:62px;top:637px;color:#a9cfc6;letter-spacing:-0.15px">Current selection: empty</div>


<!-- ===== VIEWPORT ===== -->
<div class="a" id="vp" style="left:332px;top:179px;width:1050px;height:505px;background:linear-gradient(180deg,#586c85 0%,#7b96b5 50%,#9ebfe5 100%)"></div>
<svg style="left:0;top:0" width="1382" height="946" viewBox="0 0 1382 946"><defs><linearGradient id="rl" x1="0" y1="0" x2="1" y2="1"><stop offset="0" stop-color="#c2c2c2"/><stop offset="0.45" stop-color="#eeeeee"/><stop offset="1" stop-color="#a6a6a6"/></linearGradient><linearGradient id="rm" x1="0" y1="0" x2="1" y2="1"><stop offset="0" stop-color="#8e8e8e"/><stop offset="0.5" stop-color="#c4c4c4"/><stop offset="1" stop-color="#8a8a8a"/></linearGradient><linearGradient id="rd" x1="0" y1="0" x2="1" y2="1"><stop offset="0" stop-color="#6a6a6a"/><stop offset="0.5" stop-color="#8c8c8c"/><stop offset="1" stop-color="#666"/></linearGradient><linearGradient id="rw" x1="0" y1="0" x2="0" y2="1"><stop offset="0" stop-color="#f0f0f0"/><stop offset="1" stop-color="#c8c8c8"/></linearGradient><linearGradient id="rs" x1="0" y1="0" x2="1" y2="0.3"><stop offset="0" stop-color="#dcdcdc"/><stop offset="0.6" stop-color="#b8b8b8"/><stop offset="1" stop-color="#8c8c8c"/></linearGradient></defs>
<path d="M766.4 302.8 C767.7 304.7 772.4 309.6 774.2 314.5 C776.0 319.4 777.2 325.9 777.2 332.1 C777.2 338.3 776.7 345.8 774.2 351.7 C771.8 357.5 767.1 363.1 762.5 367.3 C757.9 371.5 752.1 374.5 746.9 377.1 C741.6 379.7 735.6 381.6 731.2 382.9 C726.8 384.2 722.3 384.6 720.5 384.9" fill="none" stroke="#1e1e1e" stroke-width="5.1" stroke-linecap="round"/>
<path d="M766.4 302.8 C767.7 304.7 772.4 309.6 774.2 314.5 C776.0 319.4 777.2 325.9 777.2 332.1 C777.2 338.3 776.7 345.8 774.2 351.7 C771.8 357.5 767.1 363.1 762.5 367.3 C757.9 371.5 752.1 374.5 746.9 377.1 C741.6 379.7 735.6 381.6 731.2 382.9 C726.8 384.2 722.3 384.6 720.5 384.9" fill="none" stroke="#b0b0b0" stroke-width="2.6" stroke-linecap="round"/>
<path d="M739.0 308.7 C736.8 310.0 728.9 313.2 725.3 316.5 C721.8 319.7 719.2 324.0 717.5 328.2 C715.9 332.4 715.7 338.6 715.6 341.9 C715.4 345.1 716.4 346.8 716.5 347.8" fill="none" stroke="#1e1e1e" stroke-width="5.1" stroke-linecap="round"/>
<path d="M739.0 308.7 C736.8 310.0 728.9 313.2 725.3 316.5 C721.8 319.7 719.2 324.0 717.5 328.2 C715.9 332.4 715.7 338.6 715.6 341.9 C715.4 345.1 716.4 346.8 716.5 347.8" fill="none" stroke="#b0b0b0" stroke-width="2.6" stroke-linecap="round"/>
<path d="M766.4 299.9 C769.7 298.9 780.7 296.3 786.0 294.0 C791.2 291.7 793.8 288.9 797.7 286.2 C801.6 283.4 806.2 279.2 809.4 277.4 C812.7 275.6 814.3 274.8 817.2 275.4 C820.2 276.1 824.4 278.0 827.0 281.3 C829.6 284.5 831.6 290.4 832.9 295.0 C834.2 299.5 835.2 304.4 834.8 308.7 C834.5 312.9 832.9 317.3 830.9 320.4 C829.0 323.5 826.0 325.9 823.1 327.2 C820.2 328.5 816.6 328.5 813.3 328.2 C810.1 327.9 806.5 326.9 803.5 325.3 C800.6 323.6 797.5 321.2 795.7 318.4 C793.9 315.7 793.1 311.2 792.8 308.7 C792.5 306.1 791.7 304.5 793.8 303.2 C795.9 301.8 800.9 300.9 805.5 300.4 C810.1 300.0 817.6 299.9 821.1 300.4 C824.7 301.0 826.2 302.1 827.0 303.8 C827.8 305.5 827.7 308.6 826.0 310.6 C824.4 312.7 820.7 314.8 817.2 316.1 C813.8 317.4 807.5 318.0 805.5 318.4" fill="none" stroke="#1e1e1e" stroke-width="6.1" stroke-linecap="round"/>
<path d="M766.4 299.9 C769.7 298.9 780.7 296.3 786.0 294.0 C791.2 291.7 793.8 288.9 797.7 286.2 C801.6 283.4 806.2 279.2 809.4 277.4 C812.7 275.6 814.3 274.8 817.2 275.4 C820.2 276.1 824.4 278.0 827.0 281.3 C829.6 284.5 831.6 290.4 832.9 295.0 C834.2 299.5 835.2 304.4 834.8 308.7 C834.5 312.9 832.9 317.3 830.9 320.4 C829.0 323.5 826.0 325.9 823.1 327.2 C820.2 328.5 816.6 328.5 813.3 328.2 C810.1 327.9 806.5 326.9 803.5 325.3 C800.6 323.6 797.5 321.2 795.7 318.4 C793.9 315.7 793.1 311.2 792.8 308.7 C792.5 306.1 791.7 304.5 793.8 303.2 C795.9 301.8 800.9 300.9 805.5 300.4 C810.1 300.0 817.6 299.9 821.1 300.4 C824.7 301.0 826.2 302.1 827.0 303.8 C827.8 305.5 827.7 308.6 826.0 310.6 C824.4 312.7 820.7 314.8 817.2 316.1 C813.8 317.4 807.5 318.0 805.5 318.4" fill="none" stroke="#9a9a9a" stroke-width="3.6" stroke-linecap="round"/>
<path d="M824.1 326.2 C823.9 329.2 823.8 338.3 823.1 343.8 C822.4 349.4 821.6 355.2 820.2 359.5 C818.7 363.7 817.1 366.3 814.3 369.3 C811.5 372.2 807.3 374.5 803.5 377.1 C799.8 379.7 794.6 382.0 791.8 384.9 C789.0 387.8 787.6 391.1 786.9 394.7 C786.3 398.3 787.3 403.5 787.9 406.4 C788.6 409.3 790.4 411.3 790.8 412.3" fill="none" stroke="#1e1e1e" stroke-width="5.1" stroke-linecap="round"/>
<path d="M824.1 326.2 C823.9 329.2 823.8 338.3 823.1 343.8 C822.4 349.4 821.6 355.2 820.2 359.5 C818.7 363.7 817.1 366.3 814.3 369.3 C811.5 372.2 807.3 374.5 803.5 377.1 C799.8 379.7 794.6 382.0 791.8 384.9 C789.0 387.8 787.6 391.1 786.9 394.7 C786.3 398.3 787.3 403.5 787.9 406.4 C788.6 409.3 790.4 411.3 790.8 412.3" fill="none" stroke="#b0b0b0" stroke-width="2.6" stroke-linecap="round"/>
<path d="M672.6 375.1 L692.1 369.3 L686.2 386.9 L680.4 406.4 L678.4 434.9 L677.4 444.6 L681.4 460.2 L690.2 473.9 L688.2 481.7 L676.5 470.0 L666.7 454.3 L662.8 436.7 L663.8 434.9 L663.8 416.2 L667.7 394.7Z" fill="url(#rm)" stroke="#1e1e1e" stroke-width="1.7" stroke-linejoin="round"/>
<path d="M707.8 365.3 L719.5 365.3 L722.4 375.1 L718.5 386.9 L717.5 406.4 L717.5 434.9 L713.6 440.6 L707.8 458.2 L701.9 475.8 L691.1 473.9 L694.1 458.2 L698.0 440.6 L701.9 434.9 L703.8 406.4 L707.8 386.9Z" fill="url(#rm)" stroke="#1e1e1e" stroke-width="1.7" stroke-linejoin="round"/>
<path d="M719.5 361.4 L735.1 365.3 L742.9 382.9 L754.7 398.6 L762.5 410.3 L758.6 418.1 L746.9 400.5 L739.0 382.9 L727.3 373.2Z" fill="url(#rm)" stroke="#1e1e1e" stroke-width="1.7" stroke-linejoin="round"/>
<path d="M766.4 418.1 C764.1 415.9 757.6 408.2 752.7 404.4 C747.8 400.7 742.6 397.9 737.1 395.7 C731.5 393.4 725.7 392.2 719.5 390.8 C713.3 389.3 705.5 386.5 699.9 386.9 C694.4 387.2 689.5 389.8 686.2 392.7 C683.0 395.7 680.7 400.2 680.4 404.4 C680.1 408.7 682.0 413.9 684.3 418.1 C686.6 422.4 691.1 427.1 694.1 429.9 C697.0 432.7 699.0 431.8 701.9 434.9 C704.8 438.0 706.1 442.6 711.7 448.5 C717.2 454.3 728.6 464.4 735.1 470.0 C741.6 475.5 747.2 478.1 750.8 481.7 C754.3 485.3 755.7 489.8 756.6 491.5" fill="none" stroke="#1e1e1e" stroke-width="5.1" stroke-linecap="round"/>
<path d="M766.4 418.1 C764.1 415.9 757.6 408.2 752.7 404.4 C747.8 400.7 742.6 397.9 737.1 395.7 C731.5 393.4 725.7 392.2 719.5 390.8 C713.3 389.3 705.5 386.5 699.9 386.9 C694.4 387.2 689.5 389.8 686.2 392.7 C683.0 395.7 680.7 400.2 680.4 404.4 C680.1 408.7 682.0 413.9 684.3 418.1 C686.6 422.4 691.1 427.1 694.1 429.9 C697.0 432.7 699.0 431.8 701.9 434.9 C704.8 438.0 706.1 442.6 711.7 448.5 C717.2 454.3 728.6 464.4 735.1 470.0 C741.6 475.5 747.2 478.1 750.8 481.7 C754.3 485.3 755.7 489.8 756.6 491.5" fill="none" stroke="#b0b0b0" stroke-width="2.6" stroke-linecap="round"/>
<path d="M643.2 376.1 C641.3 376.8 634.4 378.2 631.5 380.0 C628.6 381.8 626.9 383.8 625.6 386.9 C624.3 389.9 623.8 394.3 623.7 398.6 C623.5 402.8 623.8 407.7 624.7 412.3 C625.5 416.8 627.4 422.2 628.6 426.0 C629.7 429.7 630.5 431.0 631.5 434.8 C632.5 438.5 633.6 444.1 634.4 448.5 C635.3 452.9 635.6 461.8 636.4 461.2 C637.2 460.5 638.2 450.6 639.3 444.6 C640.5 438.5 642.7 428.1 643.2 425.0 C643.7 421.9 642.6 427.4 642.3 426.0 C641.9 424.5 641.4 417.8 641.3 416.2" fill="none" stroke="#1e1e1e" stroke-width="5.1" stroke-linecap="round"/>
<path d="M643.2 376.1 C641.3 376.8 634.4 378.2 631.5 380.0 C628.6 381.8 626.9 383.8 625.6 386.9 C624.3 389.9 623.8 394.3 623.7 398.6 C623.5 402.8 623.8 407.7 624.7 412.3 C625.5 416.8 627.4 422.2 628.6 426.0 C629.7 429.7 630.5 431.0 631.5 434.8 C632.5 438.5 633.6 444.1 634.4 448.5 C635.3 452.9 635.6 461.8 636.4 461.2 C637.2 460.5 638.2 450.6 639.3 444.6 C640.5 438.5 642.7 428.1 643.2 425.0 C643.7 421.9 642.6 427.4 642.3 426.0 C641.9 424.5 641.4 417.8 641.3 416.2" fill="none" stroke="#b0b0b0" stroke-width="2.6" stroke-linecap="round"/>
<path d="M630.5 398.6 L655.9 393.7 L661.8 396.6 L665.7 397.6 L665.7 401.5 L661.8 404.4 L649.1 412.3 L645.2 418.1 L639.3 416.2 L635.4 408.4Z" fill="url(#rm)" stroke="#1e1e1e" stroke-width="1.7" stroke-linejoin="round"/>
<path d="M621.7 398.6 L628.6 396.6 L633.5 406.4 L629.6 412.3 L622.7 413.2Z" fill="#9c9c9c" stroke="#1e1e1e" stroke-width="1.7" stroke-linejoin="round"/>
<path d="M722.4 282.3 C720.6 285.4 714.8 295.0 711.7 300.8 C708.6 306.7 705.5 314.5 703.8 317.4 C702.2 320.4 702.2 318.3 701.9 318.4" fill="none" stroke="#1e1e1e" stroke-width="5.1" stroke-linecap="round"/>
<path d="M722.4 282.3 C720.6 285.4 714.8 295.0 711.7 300.8 C708.6 306.7 705.5 314.5 703.8 317.4 C702.2 320.4 702.2 318.3 701.9 318.4" fill="none" stroke="#b0b0b0" stroke-width="2.6" stroke-linecap="round"/>
<path d="M741.4 262.7 L746.9 273.5 L750.8 284.2 L737.1 291.1 L735.1 285.2 L727.3 288.1 L722.4 282.3 L722.4 277.4 L735.1 272.5 L739.0 268.6Z" fill="#9c9c9c" stroke="#1e1e1e" stroke-width="1.7" stroke-linejoin="round"/>
<path d="M681.4 332.1 L701.9 317.4 L703.8 327.2 L706.8 332.1 L699.0 335.0 L696.0 347.8 L690.2 341.9 L688.2 336.0Z" fill="#9c9c9c" stroke="#1e1e1e" stroke-width="1.7" stroke-linejoin="round"/>
<path d="M696.0 346.8 C694.7 348.4 690.0 354.4 688.2 356.5 C686.4 358.7 685.8 359.0 685.3 359.5" fill="none" stroke="#1e1e1e" stroke-width="5.1" stroke-linecap="round"/>
<path d="M696.0 346.8 C694.7 348.4 690.0 354.4 688.2 356.5 C686.4 358.7 685.8 359.0 685.3 359.5" fill="none" stroke="#b0b0b0" stroke-width="2.6" stroke-linecap="round"/>
<path d="M705.8 463.1 L737.1 457.3 L740.0 461.2 L766.4 460.2 L795.7 456.3 L825.1 446.5 L836.8 440.6 L838.7 444.6 L830.9 452.4 L805.5 464.1 L776.2 470.9 L746.9 471.9 L719.5 467.0Z" fill="url(#rm)" stroke="#1e1e1e" stroke-width="1.7" stroke-linejoin="round"/>
<path d="M711.7 452.4 L735.1 440.6 L762.5 427.0 L764.4 434.8 L746.9 444.6 L719.5 457.3Z" fill="url(#rl)" stroke="#1e1e1e" stroke-width="1.7" stroke-linejoin="round"/>
<path d="M676.5 470.9 C678.4 470.3 683.3 468.2 688.2 467.0 C693.1 465.9 702.9 464.6 705.8 464.1" fill="none" stroke="#1e1e1e" stroke-width="5.1" stroke-linecap="round"/>
<path d="M676.5 470.9 C678.4 470.3 683.3 468.2 688.2 467.0 C693.1 465.9 702.9 464.6 705.8 464.1" fill="none" stroke="#b0b0b0" stroke-width="2.6" stroke-linecap="round"/>
<path d="M782.0 444.6 C782.4 446.5 782.7 453.0 784.0 456.3 C785.3 459.5 786.9 462.0 789.9 464.1 C792.8 466.2 797.4 468.3 801.6 469.0 C805.8 469.6 812.5 469.2 815.3 468.0 C818.0 466.9 818.5 464.4 818.2 462.1 C817.9 459.9 815.1 456.9 813.3 454.3 C811.5 451.7 808.4 447.8 807.5 446.5" fill="none" stroke="#1e1e1e" stroke-width="5.1" stroke-linecap="round"/>
<path d="M782.0 444.6 C782.4 446.5 782.7 453.0 784.0 456.3 C785.3 459.5 786.9 462.0 789.9 464.1 C792.8 466.2 797.4 468.3 801.6 469.0 C805.8 469.6 812.5 469.2 815.3 468.0 C818.0 466.9 818.5 464.4 818.2 462.1 C817.9 459.9 815.1 456.9 813.3 454.3 C811.5 451.7 808.4 447.8 807.5 446.5" fill="none" stroke="#b0b0b0" stroke-width="2.6" stroke-linecap="round"/>
<path d="M791.8 462.1 L805.5 461.2 L805.5 477.8 L797.7 471.9Z" fill="#9c9c9c" stroke="#1e1e1e" stroke-width="1.7" stroke-linejoin="round"/>
<path d="M691.1 475.8 C690.3 478.1 686.9 485.0 686.2 489.5 C685.6 494.1 685.9 499.0 687.2 503.2 C688.5 507.4 691.6 511.7 694.1 514.9 C696.5 518.2 700.6 521.4 701.9 522.8" fill="none" stroke="#1e1e1e" stroke-width="5.1" stroke-linecap="round"/>
<path d="M691.1 475.8 C690.3 478.1 686.9 485.0 686.2 489.5 C685.6 494.1 685.9 499.0 687.2 503.2 C688.5 507.4 691.6 511.7 694.1 514.9 C696.5 518.2 700.6 521.4 701.9 522.8" fill="none" stroke="#b0b0b0" stroke-width="2.6" stroke-linecap="round"/>
<path d="M695.0 477.8 L746.9 493.4 L749.8 487.6 L758.6 493.4 L753.7 500.3 L764.4 511.0 L742.9 513.0 L742.9 505.2 L696.0 487.6Z" fill="#6c6c6c" stroke="#1e1e1e" stroke-width="1.7" stroke-linejoin="round"/>
<path d="M696.0 514.0 L712.6 511.0 L715.6 520.8 L735.1 528.6 L733.2 542.3 L713.6 534.5 L710.7 540.3 L701.9 522.8Z" fill="#6c6c6c" stroke="#1e1e1e" stroke-width="1.7" stroke-linejoin="round"/>
<path d="M750.8 536.4 L772.3 533.5 L766.4 544.3 L756.6 549.1Z" fill="#6c6c6c" stroke="#1e1e1e" stroke-width="1.7" stroke-linejoin="round"/>
<path d="M754.7 500.3 L760.5 491.5 L770.3 489.5 L782.0 501.2 L787.9 510.0 L782.0 530.6 L762.5 531.5 L737.1 534.5 L735.1 526.7 L739.0 516.9 L762.5 512.0Z" fill="url(#rl)" stroke="#1e1e1e" stroke-width="1.7" stroke-linejoin="round"/>
<path d="M735.1 534.5 L746.9 533.5 L751.7 544.3 L744.9 553.1 L738.1 546.2Z" fill="url(#rl)" stroke="#1e1e1e" stroke-width="1.7" stroke-linejoin="round"/>
<path d="M748.8 547.2 C750.8 548.5 757.1 552.9 760.5 555.0 C764.0 557.1 767.9 559.1 769.3 559.9" fill="none" stroke="#1e1e1e" stroke-width="5.1" stroke-linecap="round"/>
<path d="M748.8 547.2 C750.8 548.5 757.1 552.9 760.5 555.0 C764.0 557.1 767.9 559.1 769.3 559.9" fill="none" stroke="#b0b0b0" stroke-width="2.6" stroke-linecap="round"/>
<path d="M769.3 559.9 L776.2 569.7 L776.2 579.4 L770.3 589.2 L760.5 596.1 L746.9 591.2 L744.9 583.4 L758.6 577.5 L764.4 569.7Z" fill="url(#rm)" stroke="#1e1e1e" stroke-width="1.7" stroke-linejoin="round"/>
<path d="M742.9 595.1 C746.2 595.9 757.0 598.3 762.5 600.0 C768.0 601.6 770.6 603.4 776.2 604.9 C781.7 606.3 790.2 609.4 795.7 608.8 C801.3 608.1 805.5 604.5 809.4 601.0 C813.3 597.4 816.6 591.2 819.2 587.3 C821.8 583.4 824.3 578.4 825.1 577.5 C825.9 576.5 823.5 582.5 824.0 581.6 C824.5 580.6 827.3 573.5 827.9 571.8" fill="none" stroke="#1e1e1e" stroke-width="5.1" stroke-linecap="round"/>
<path d="M742.9 595.1 C746.2 595.9 757.0 598.3 762.5 600.0 C768.0 601.6 770.6 603.4 776.2 604.9 C781.7 606.3 790.2 609.4 795.7 608.8 C801.3 608.1 805.5 604.5 809.4 601.0 C813.3 597.4 816.6 591.2 819.2 587.3 C821.8 583.4 824.3 578.4 825.1 577.5 C825.9 576.5 823.5 582.5 824.0 581.6 C824.5 580.6 827.3 573.5 827.9 571.8" fill="none" stroke="#b0b0b0" stroke-width="2.6" stroke-linecap="round"/>
<path d="M956.9 499.5 C955.9 501.5 953.9 507.7 951.0 511.3 C948.1 514.8 941.2 519.4 939.3 521.0" fill="none" stroke="#1e1e1e" stroke-width="5.1" stroke-linecap="round"/>
<path d="M956.9 499.5 C955.9 501.5 953.9 507.7 951.0 511.3 C948.1 514.8 941.2 519.4 939.3 521.0" fill="none" stroke="#b0b0b0" stroke-width="2.6" stroke-linecap="round"/>
<path d="M915.8 527.9 L927.6 522.0 L939.3 522.0 L937.3 528.8 L927.6 532.7 L911.9 537.6 L888.5 540.6 L884.6 542.5 L882.6 538.6 L896.3 534.7Z" fill="url(#rm)" stroke="#1e1e1e" stroke-width="1.7" stroke-linejoin="round"/>
<path d="M884.6 541.5 C881.3 542.5 870.9 545.0 865.0 547.4 C859.2 549.8 854.0 553.1 849.4 556.2 C844.8 559.3 840.8 562.7 837.7 566.0 C834.6 569.2 831.8 573.1 830.8 575.7 C829.9 578.3 830.4 580.6 831.8 581.6 C833.3 582.6 836.1 583.2 839.6 581.6 C843.2 580.0 847.8 575.4 853.3 571.8 C858.8 568.2 867.3 563.2 872.9 560.1 C878.4 557.0 884.2 554.4 886.5 553.3" fill="none" stroke="#1e1e1e" stroke-width="5.1" stroke-linecap="round"/>
<path d="M884.6 541.5 C881.3 542.5 870.9 545.0 865.0 547.4 C859.2 549.8 854.0 553.1 849.4 556.2 C844.8 559.3 840.8 562.7 837.7 566.0 C834.6 569.2 831.8 573.1 830.8 575.7 C829.9 578.3 830.4 580.6 831.8 581.6 C833.3 582.6 836.1 583.2 839.6 581.6 C843.2 580.0 847.8 575.4 853.3 571.8 C858.8 568.2 867.3 563.2 872.9 560.1 C878.4 557.0 884.2 554.4 886.5 553.3" fill="none" stroke="#b0b0b0" stroke-width="2.6" stroke-linecap="round"/>
<path d="M884.6 551.3 L902.2 545.4 L923.6 543.5 L939.3 542.5 L937.3 537.6 L954.9 542.5 L966.6 546.4 L968.6 542.5 L978.4 544.5 L977.4 548.4 L966.6 550.3 L960.8 561.1 L951.0 554.2 L927.6 553.3 L906.1 553.3 L886.5 555.2Z" fill="url(#rm)" stroke="#1e1e1e" stroke-width="1.7" stroke-linejoin="round"/>
<path d="M824.0 571.8 L826.0 558.1 L833.8 542.5 L845.5 526.9 L861.1 511.3 L876.8 497.6 L884.6 490.7 L890.4 493.7 L876.8 505.4 L865.0 517.1 L849.4 532.7 L837.7 548.4 L829.9 562.1 L826.9 572.8Z" fill="url(#rl)" stroke="#1e1e1e" stroke-width="1.7" stroke-linejoin="round"/>
<path d="M886.5 491.7 L894.3 482.0" fill="none" stroke="#1e1e1e" stroke-width="5.1" stroke-linecap="round"/>
<path d="M886.5 491.7 L894.3 482.0" fill="none" stroke="#b0b0b0" stroke-width="2.6" stroke-linecap="round"/>
<path d="M827.9 581.6 L833.8 566.0 L843.5 552.3 L857.2 538.6 L872.9 521.0 L876.8 515.2 L872.9 511.3 L888.5 507.4 L896.3 503.4 L900.2 499.5 L902.2 511.3 L898.2 519.1 L886.5 519.1 L876.8 530.8 L861.1 546.4 L847.5 558.1 L837.7 569.9 L831.8 583.5Z" fill="url(#rl)" stroke="#1e1e1e" stroke-width="1.7" stroke-linejoin="round"/>
<path d="M900.2 500.5 L910.0 489.8" fill="none" stroke="#1e1e1e" stroke-width="5.1" stroke-linecap="round"/>
<path d="M900.2 500.5 L910.0 489.8" fill="none" stroke="#b0b0b0" stroke-width="2.6" stroke-linecap="round"/>
<path d="M769.3 597.2 L783.0 584.5" fill="none" stroke="#1e1e1e" stroke-width="5.1" stroke-linecap="round"/>
<path d="M769.3 597.2 L783.0 584.5" fill="none" stroke="#b0b0b0" stroke-width="2.6" stroke-linecap="round"/>
<path d="M782.0 583.5 L784.0 577.7 L798.6 556.2 L814.2 530.8 L827.9 507.4 L841.6 480.0 L849.5 469.0 L852.0 452.4 L858.7 454.3 L858.3 471.9 L859.2 480.0 L849.4 497.6 L833.8 524.9 L818.1 554.2 L802.5 573.8 L792.7 583.5 L785.9 585.5Z" fill="url(#rs)" stroke="#1e1e1e" stroke-width="1.7" stroke-linejoin="round"/>
<path d="M960.8 581.6 C961.7 581.1 964.0 578.0 966.6 578.7 C969.2 579.3 974.0 582.7 976.4 585.5 C978.8 588.3 981.1 592.8 981.3 595.3 C981.4 597.7 979.2 599.7 977.4 600.2 C975.6 600.6 973.0 600.0 970.5 598.2 C968.1 596.4 964.5 592.0 962.7 589.4 C960.9 586.8 960.3 583.7 959.8 582.6" fill="none" stroke="#1e1e1e" stroke-width="5.1" stroke-linecap="round"/>
<path d="M960.8 581.6 C961.7 581.1 964.0 578.0 966.6 578.7 C969.2 579.3 974.0 582.7 976.4 585.5 C978.8 588.3 981.1 592.8 981.3 595.3 C981.4 597.7 979.2 599.7 977.4 600.2 C975.6 600.6 973.0 600.0 970.5 598.2 C968.1 596.4 964.5 592.0 962.7 589.4 C960.9 586.8 960.3 583.7 959.8 582.6" fill="none" stroke="#b0b0b0" stroke-width="2.6" stroke-linecap="round"/>
<path d="M951.0 575.7 C948.4 575.9 939.6 575.7 935.4 576.7 C931.1 577.7 928.5 578.8 925.6 581.6 C922.7 584.4 919.7 590.7 917.8 593.3 C915.8 595.9 914.5 596.6 913.9 597.2" fill="none" stroke="#1e1e1e" stroke-width="5.1" stroke-linecap="round"/>
<path d="M951.0 575.7 C948.4 575.9 939.6 575.7 935.4 576.7 C931.1 577.7 928.5 578.8 925.6 581.6 C922.7 584.4 919.7 590.7 917.8 593.3 C915.8 595.9 914.5 596.6 913.9 597.2" fill="none" stroke="#b0b0b0" stroke-width="2.6" stroke-linecap="round"/>
<path d="M831.8 584.5 C833.5 585.3 836.7 587.9 841.6 589.4 C846.5 590.9 853.8 591.8 861.1 593.3 C868.5 594.8 881.5 597.4 885.6 598.2" fill="none" stroke="#1e1e1e" stroke-width="5.1" stroke-linecap="round"/>
<path d="M831.8 584.5 C833.5 585.3 836.7 587.9 841.6 589.4 C846.5 590.9 853.8 591.8 861.1 593.3 C868.5 594.8 881.5 597.4 885.6 598.2" fill="none" stroke="#b0b0b0" stroke-width="2.6" stroke-linecap="round"/>
<path d="M885.6 597.2 L892.4 592.3 L902.2 597.2 L902.2 605.0 L896.3 605.0 L885.6 604.1Z" fill="#6c6c6c" stroke="#1e1e1e" stroke-width="1.7" stroke-linejoin="round"/>
<path d="M902.2 597.2 L911.9 597.2 L918.8 595.3 L916.8 608.0 L906.1 603.1 L902.2 605.0Z" fill="url(#rl)" stroke="#1e1e1e" stroke-width="1.7" stroke-linejoin="round"/>
<path d="M918.9 458.7 C916.6 460.3 908.4 464.5 905.2 468.4 C901.9 472.3 900.0 477.9 899.3 482.1 C898.7 486.3 901.0 491.9 901.3 493.8" fill="none" stroke="#1e1e1e" stroke-width="5.1" stroke-linecap="round"/>
<path d="M918.9 458.7 C916.6 460.3 908.4 464.5 905.2 468.4 C901.9 472.3 900.0 477.9 899.3 482.1 C898.7 486.3 901.0 491.9 901.3 493.8" fill="none" stroke="#b0b0b0" stroke-width="2.6" stroke-linecap="round"/>
<path d="M956.0 497.8 C955.4 499.7 954.4 505.9 952.1 509.5 C949.8 513.1 946.2 516.3 942.3 519.3 C938.4 522.2 934.2 524.5 928.7 527.1 C923.1 529.7 915.6 532.9 909.1 534.9 C902.6 536.9 896.1 537.2 889.6 538.8 C883.0 540.4 873.3 543.7 870.0 544.7" fill="none" stroke="#1e1e1e" stroke-width="5.1" stroke-linecap="round"/>
<path d="M956.0 497.8 C955.4 499.7 954.4 505.9 952.1 509.5 C949.8 513.1 946.2 516.3 942.3 519.3 C938.4 522.2 934.2 524.5 928.7 527.1 C923.1 529.7 915.6 532.9 909.1 534.9 C902.6 536.9 896.1 537.2 889.6 538.8 C883.0 540.4 873.3 543.7 870.0 544.7" fill="none" stroke="#b0b0b0" stroke-width="2.6" stroke-linecap="round"/>
<path d="M922.8 523.2 L936.5 521.2 L938.4 529.0 L924.7 534.9Z" fill="url(#rm)" stroke="#1e1e1e" stroke-width="1.7" stroke-linejoin="round"/>
<path d="M870.0 493.8 L881.7 489.9 L889.6 491.9 L881.7 501.7 L870.0 509.5Z" fill="url(#rl)" stroke="#1e1e1e" stroke-width="1.7" stroke-linejoin="round"/>
<path d="M870.0 513.4 L881.7 507.5 L899.3 509.5 L899.3 517.3 L889.6 523.2 L870.0 532.9Z" fill="url(#rl)" stroke="#1e1e1e" stroke-width="1.7" stroke-linejoin="round"/>
<path d="M870.0 556.4 L883.7 553.5" fill="none" stroke="#1e1e1e" stroke-width="5.1" stroke-linecap="round"/>
<path d="M870.0 556.4 L883.7 553.5" fill="none" stroke="#b0b0b0" stroke-width="2.6" stroke-linecap="round"/>
<path d="M883.7 550.5 L909.1 544.7 L938.4 543.7 L938.4 537.8 L956.0 543.7 L971.7 542.7 L977.5 544.7 L967.8 549.6 L959.9 561.3 L952.1 554.4 L928.7 554.4 L899.3 554.4 L885.6 556.4Z" fill="#9c9c9c" stroke="#1e1e1e" stroke-width="1.7" stroke-linejoin="round"/>
<path d="M856.3 466.1 C858.6 469.4 864.5 478.5 870.0 486.0 C875.5 493.6 883.0 503.0 889.6 511.4 C896.1 519.9 902.6 529.4 909.1 536.9 C915.6 544.3 922.1 550.9 928.7 556.4 C935.2 561.9 942.3 566.2 948.2 570.1 C954.1 574.0 963.4 579.2 963.8 579.9 C964.3 580.5 951.2 573.5 951.0 573.8 C950.8 574.1 960.8 580.3 962.7 581.6" fill="none" stroke="#1e1e1e" stroke-width="5.5" stroke-linecap="round"/>
<path d="M856.3 466.1 C858.6 469.4 864.5 478.5 870.0 486.0 C875.5 493.6 883.0 503.0 889.6 511.4 C896.1 519.9 902.6 529.4 909.1 536.9 C915.6 544.3 922.1 550.9 928.7 556.4 C935.2 561.9 942.3 566.2 948.2 570.1 C954.1 574.0 963.4 579.2 963.8 579.9 C964.3 580.5 951.2 573.5 951.0 573.8 C950.8 574.1 960.8 580.3 962.7 581.6" fill="none" stroke="#7c7c7c" stroke-width="3.0" stroke-linecap="round"/>
<path d="M935.4 562.1 L943.2 557.2 L954.9 567.9 L965.7 575.7 L960.8 581.6 L951.0 575.7 L943.2 567.9Z" fill="#6c6c6c" stroke="#1e1e1e" stroke-width="1.7" stroke-linejoin="round"/>
<path d="M924.7 423.5 L948.2 420.5 L961.9 424.4 L969.7 439.1 L967.8 458.7 L959.9 472.3 L948.2 478.2 L934.5 476.2 L936.5 464.5 L948.2 458.7 L956.0 445.0 L952.1 433.2 L938.4 432.3 L928.7 441.1Z" fill="#6c6c6c" stroke="#1e1e1e" stroke-width="1.7" stroke-linejoin="round"/>
<path d="M918.9 456.7 L936.5 455.7 L934.5 476.2 L922.8 474.3Z" fill="#6c6c6c" stroke="#1e1e1e" stroke-width="1.7" stroke-linejoin="round"/>
<path d="M940.4 400.0 L950.2 400.0 L956.0 403.9 L952.1 411.7 L948.2 407.8 L942.3 421.5 L934.5 427.4 L932.6 419.6 L937.4 411.7Z" fill="#6c6c6c" stroke="#1e1e1e" stroke-width="1.7" stroke-linejoin="round"/>
<path d="M995.1 419.6 L1002.9 400.0" fill="none" stroke="#1e1e1e" stroke-width="5.1" stroke-linecap="round"/>
<path d="M995.1 419.6 L1002.9 400.0" fill="none" stroke="#b0b0b0" stroke-width="2.6" stroke-linecap="round"/>
<path d="M987.3 417.6 L1006.9 411.7 L1026.4 410.8 L1034.2 413.7 L1043.0 429.3 L1036.2 425.4 L1026.4 427.4 L1010.8 429.3 L999.0 433.2 L990.2 425.4Z" fill="#6c6c6c" stroke="#1e1e1e" stroke-width="1.7" stroke-linejoin="round"/>
<path d="M1036.2 429.3 C1035.5 431.0 1034.2 435.8 1032.3 439.1 C1030.3 442.4 1026.2 445.0 1024.4 448.9 C1022.7 452.8 1021.5 458.3 1021.5 462.6 C1021.5 466.8 1024.0 472.3 1024.4 474.3" fill="none" stroke="#1e1e1e" stroke-width="5.1" stroke-linecap="round"/>
<path d="M1036.2 429.3 C1035.5 431.0 1034.2 435.8 1032.3 439.1 C1030.3 442.4 1026.2 445.0 1024.4 448.9 C1022.7 452.8 1021.5 458.3 1021.5 462.6 C1021.5 466.8 1024.0 472.3 1024.4 474.3" fill="none" stroke="#b0b0b0" stroke-width="2.6" stroke-linecap="round"/>
<path d="M1065.5 417.6 L1068.4 400.0" fill="none" stroke="#1e1e1e" stroke-width="5.1" stroke-linecap="round"/>
<path d="M1065.5 417.6 L1068.4 400.0" fill="none" stroke="#b0b0b0" stroke-width="2.6" stroke-linecap="round"/>
<path d="M1039.1 464.5 L1046.0 452.8 L1053.8 439.1 L1057.7 421.5 L1060.6 417.6 L1069.4 419.6 L1070.4 427.4 L1063.5 435.2 L1057.7 446.9 L1049.9 458.7 L1042.0 472.3Z" fill="url(#rl)" stroke="#1e1e1e" stroke-width="1.7" stroke-linejoin="round"/>
<path d="M1042.0 472.3 L1055.7 462.6 L1073.3 450.8 L1087.0 444.0 L1094.8 445.9 L1104.6 454.7 L1110.5 451.8 L1120.2 455.7 L1124.2 464.5 L1120.2 475.3 L1115.4 472.3 L1114.4 462.6 L1107.5 458.7 L1098.7 459.6 L1090.9 451.8 L1077.2 458.7 L1063.5 470.4 L1051.8 480.2Z" fill="url(#rl)" stroke="#1e1e1e" stroke-width="1.7" stroke-linejoin="round"/>
<path d="M1009.8 525.1 C1009.8 527.7 1009.0 536.2 1009.8 540.8 C1010.6 545.3 1012.2 549.6 1014.7 552.5 C1017.1 555.4 1022.0 558.4 1024.4 558.4 C1026.9 558.4 1028.7 556.1 1029.3 552.5 C1030.0 548.9 1029.2 541.7 1028.4 536.9 C1027.5 532.0 1025.1 525.4 1024.4 523.2" fill="none" stroke="#1e1e1e" stroke-width="5.1" stroke-linecap="round"/>
<path d="M1009.8 525.1 C1009.8 527.7 1009.0 536.2 1009.8 540.8 C1010.6 545.3 1012.2 549.6 1014.7 552.5 C1017.1 555.4 1022.0 558.4 1024.4 558.4 C1026.9 558.4 1028.7 556.1 1029.3 552.5 C1030.0 548.9 1029.2 541.7 1028.4 536.9 C1027.5 532.0 1025.1 525.4 1024.4 523.2" fill="none" stroke="#b0b0b0" stroke-width="2.6" stroke-linecap="round"/>
<path d="M1006.9 493.8 L1014.7 478.2 L1020.5 470.4 L1026.4 476.2 L1024.4 491.9 L1020.5 509.5 L1028.4 519.3 L1018.6 525.1 L1010.8 527.1 L1006.9 513.4Z" fill="url(#rm)" stroke="#1e1e1e" stroke-width="1.7" stroke-linejoin="round"/>
<path d="M1000.0 456.7 C1003.8 458.0 1014.8 461.7 1022.5 464.5 C1030.1 467.3 1039.1 471.2 1046.0 473.3 C1052.8 475.4 1060.6 476.6 1063.5 477.2" fill="none" stroke="#1e1e1e" stroke-width="5.1" stroke-linecap="round"/>
<path d="M1000.0 456.7 C1003.8 458.0 1014.8 461.7 1022.5 464.5 C1030.1 467.3 1039.1 471.2 1046.0 473.3 C1052.8 475.4 1060.6 476.6 1063.5 477.2" fill="none" stroke="#b0b0b0" stroke-width="2.6" stroke-linecap="round"/>
<path d="M1100.7 483.1 C1102.6 482.6 1109.2 481.6 1112.4 480.2 C1115.7 478.7 1118.9 475.3 1120.2 474.3" fill="none" stroke="#1e1e1e" stroke-width="5.1" stroke-linecap="round"/>
<path d="M1100.7 483.1 C1102.6 482.6 1109.2 481.6 1112.4 480.2 C1115.7 478.7 1118.9 475.3 1120.2 474.3" fill="none" stroke="#b0b0b0" stroke-width="2.6" stroke-linecap="round"/>
<path d="M1060.6 477.2 L1090.9 474.3 L1088.0 480.2 L1100.7 483.1 L1083.1 486.0 L1065.5 488.0Z" fill="#9c9c9c" stroke="#1e1e1e" stroke-width="1.7" stroke-linejoin="round"/>
<path d="M991.2 489.9 C993.8 490.6 1001.6 493.5 1006.9 493.8 C1012.1 494.2 1017.6 493.2 1022.5 491.9 C1027.4 490.6 1031.6 488.3 1036.2 486.0 C1040.7 483.7 1045.3 479.7 1049.9 478.2 C1054.4 476.7 1061.3 477.4 1063.5 477.2" fill="none" stroke="#1e1e1e" stroke-width="5.1" stroke-linecap="round"/>
<path d="M991.2 489.9 C993.8 490.6 1001.6 493.5 1006.9 493.8 C1012.1 494.2 1017.6 493.2 1022.5 491.9 C1027.4 490.6 1031.6 488.3 1036.2 486.0 C1040.7 483.7 1045.3 479.7 1049.9 478.2 C1054.4 476.7 1061.3 477.4 1063.5 477.2" fill="none" stroke="#b0b0b0" stroke-width="2.6" stroke-linecap="round"/>
<path d="M880.8 473.3 L870.0 464.5" fill="none" stroke="#1e1e1e" stroke-width="5.1" stroke-linecap="round"/>
<path d="M880.8 473.3 L870.0 464.5" fill="none" stroke="#b0b0b0" stroke-width="2.6" stroke-linecap="round"/>
<path d="M870.0 405.9 L881.7 402.0 L899.3 400.0 L895.4 409.8 L899.3 422.5 L891.5 418.6 L889.6 425.4 L893.5 435.2 L909.1 445.0 L928.7 444.0 L948.2 439.1 L967.8 440.1 L987.3 445.9 L1000.0 451.8 L1000.0 462.6 L987.3 460.6 L967.8 454.7 L948.2 453.8 L928.7 455.7 L909.1 454.7 L891.5 448.9 L883.7 437.1 L879.8 421.5Z" fill="url(#rl)" stroke="#1e1e1e" stroke-width="1.7" stroke-linejoin="round"/>
<path d="M880.8 472.3 L885.6 467.4 L909.1 471.4 L938.4 478.2 L967.8 481.1 L970.7 472.3 L991.2 489.0 L966.8 509.5 L965.8 497.8 L938.4 493.8 L909.1 488.0 L883.7 478.2Z" fill="url(#rl)" stroke="#1e1e1e" stroke-width="1.7" stroke-linejoin="round"/>
<path d="M1005.9 249.4 C1008.6 252.2 1016.5 260.4 1022.5 266.1 C1028.5 271.8 1035.7 278.3 1042.0 283.7 C1048.4 289.0 1057.5 295.9 1060.6 298.3" fill="none" stroke="#1e1e1e" stroke-width="5.1" stroke-linecap="round"/>
<path d="M1005.9 249.4 C1008.6 252.2 1016.5 260.4 1022.5 266.1 C1028.5 271.8 1035.7 278.3 1042.0 283.7 C1048.4 289.0 1057.5 295.9 1060.6 298.3" fill="none" stroke="#b0b0b0" stroke-width="2.6" stroke-linecap="round"/>
<path d="M1060.6 298.3 L1073.3 300.3 L1091.9 303.2 L1086.0 309.1 L1089.0 313.0 L1075.3 312.0 L1063.5 313.0Z" fill="#9c9c9c" stroke="#1e1e1e" stroke-width="1.7" stroke-linejoin="round"/>
<path d="M1089.0 313.0 L1097.8 324.7" fill="none" stroke="#1e1e1e" stroke-width="5.1" stroke-linecap="round"/>
<path d="M1089.0 313.0 L1097.8 324.7" fill="none" stroke="#b0b0b0" stroke-width="2.6" stroke-linecap="round"/>
<path d="M1097.8 324.7 L1107.5 332.5 L1108.5 340.3 L1104.6 344.3 L1098.7 340.3 L1096.8 330.6Z" fill="url(#rl)" stroke="#1e1e1e" stroke-width="1.7" stroke-linejoin="round"/>
<path d="M1103.6 355.0 L1110.5 354.0 L1114.4 365.8 L1112.4 379.4 L1108.5 377.5 L1107.5 365.8Z" fill="url(#rl)" stroke="#1e1e1e" stroke-width="1.7" stroke-linejoin="round"/>
<path d="M981.4 258.2 C981.3 260.5 980.1 267.7 980.5 271.9 C980.8 276.2 981.3 280.1 983.4 283.7 C985.5 287.2 990.9 291.1 993.2 293.4 C995.4 295.7 996.4 296.7 997.1 297.3" fill="none" stroke="#1e1e1e" stroke-width="5.1" stroke-linecap="round"/>
<path d="M981.4 258.2 C981.3 260.5 980.1 267.7 980.5 271.9 C980.8 276.2 981.3 280.1 983.4 283.7 C985.5 287.2 990.9 291.1 993.2 293.4 C995.4 295.7 996.4 296.7 997.1 297.3" fill="none" stroke="#b0b0b0" stroke-width="2.6" stroke-linecap="round"/>
<path d="M980.5 232.8 L987.3 239.7 L995.1 238.7 L1006.9 243.6 L1004.9 250.4 L996.1 254.3 L998.1 260.2 L991.2 256.3 L983.4 258.2 L978.5 248.5 L977.5 237.7Z" fill="url(#rl)" stroke="#1e1e1e" stroke-width="1.7" stroke-linejoin="round"/>
<path d="M999.0 283.7 C1001.0 283.7 1007.5 282.7 1010.8 283.7 C1014.0 284.6 1016.8 286.9 1018.6 289.5 C1020.4 292.1 1020.5 297.0 1021.5 299.3 C1022.5 301.6 1024.0 302.5 1024.4 303.2" fill="none" stroke="#1e1e1e" stroke-width="5.1" stroke-linecap="round"/>
<path d="M999.0 283.7 C1001.0 283.7 1007.5 282.7 1010.8 283.7 C1014.0 284.6 1016.8 286.9 1018.6 289.5 C1020.4 292.1 1020.5 297.0 1021.5 299.3 C1022.5 301.6 1024.0 302.5 1024.4 303.2" fill="none" stroke="#b0b0b0" stroke-width="2.6" stroke-linecap="round"/>
<path d="M959.9 281.7 L967.8 274.9 L979.5 277.8 L995.1 273.9 L1000.0 280.7 L997.1 285.6 L985.3 288.5 L975.6 287.6 L981.4 299.3 L987.3 313.0 L988.3 326.7 L985.3 340.3 L981.4 342.3 L975.6 330.6 L971.7 313.0 L965.8 295.4Z" fill="url(#rl)" stroke="#1e1e1e" stroke-width="1.7" stroke-linejoin="round"/>
<path d="M1004.9 316.9 L1012.7 314.0 L1008.8 322.8 L1004.9 322.8Z" fill="url(#rw)" stroke="#1e1e1e" stroke-width="1.7" stroke-linejoin="round"/>
<path d="M1002.9 320.8 C1002.0 322.4 998.2 327.0 997.1 330.6 C995.9 334.2 996.3 340.3 996.1 342.3" fill="none" stroke="#1e1e1e" stroke-width="5.1" stroke-linecap="round"/>
<path d="M1002.9 320.8 C1002.0 322.4 998.2 327.0 997.1 330.6 C995.9 334.2 996.3 340.3 996.1 342.3" fill="none" stroke="#b0b0b0" stroke-width="2.6" stroke-linecap="round"/>
<path d="M990.2 346.2 L999.0 343.3 L1000.0 357.9 L997.1 369.7 L991.2 373.6 L993.2 361.9Z" fill="#6c6c6c" stroke="#1e1e1e" stroke-width="1.7" stroke-linejoin="round"/>
<path d="M995.1 296.4 L1002.9 292.4 L1018.6 303.2 L1034.2 310.0 L1046.0 314.9 L1053.8 318.8 L1060.6 330.6 L1063.5 340.3 L1071.4 341.3 L1073.3 349.1 L1055.7 350.1 L1053.8 342.3 L1047.9 337.4 L1048.9 326.7 L1040.1 318.8 L1024.4 315.9 L1006.9 312.0 L997.1 305.2Z" fill="url(#rd)" stroke="#1e1e1e" stroke-width="1.7" stroke-linejoin="round"/>
<path d="M956.0 322.8 C954.4 323.4 949.3 324.4 946.2 326.7 C943.2 328.9 939.5 332.2 937.4 336.4 C935.4 340.7 934.5 346.5 934.1 352.1 C933.8 357.6 934.6 364.1 935.5 369.7 C936.4 375.2 938.1 380.8 939.4 385.3 C940.7 389.9 942.7 395.1 943.3 397.0" fill="none" stroke="#1e1e1e" stroke-width="5.1" stroke-linecap="round"/>
<path d="M956.0 322.8 C954.4 323.4 949.3 324.4 946.2 326.7 C943.2 328.9 939.5 332.2 937.4 336.4 C935.4 340.7 934.5 346.5 934.1 352.1 C933.8 357.6 934.6 364.1 935.5 369.7 C936.4 375.2 938.1 380.8 939.4 385.3 C940.7 389.9 942.7 395.1 943.3 397.0" fill="none" stroke="#b0b0b0" stroke-width="2.6" stroke-linecap="round"/>
<path d="M954.1 323.7 L961.9 319.8 L967.8 320.8 L973.6 334.5 L979.5 344.3 L973.6 344.3 L965.8 334.5 L959.9 328.6Z" fill="url(#rm)" stroke="#1e1e1e" stroke-width="1.7" stroke-linejoin="round"/>
<path d="M973.6 338.4 C975.9 340.3 983.9 346.2 987.3 350.1 C990.7 354.0 993.2 357.9 994.1 361.9 C995.1 365.8 993.5 370.3 993.2 373.6 C992.8 376.8 992.4 380.1 992.2 381.4" fill="none" stroke="#1e1e1e" stroke-width="5.1" stroke-linecap="round"/>
<path d="M973.6 338.4 C975.9 340.3 983.9 346.2 987.3 350.1 C990.7 354.0 993.2 357.9 994.1 361.9 C995.1 365.8 993.5 370.3 993.2 373.6 C992.8 376.8 992.4 380.1 992.2 381.4" fill="none" stroke="#b0b0b0" stroke-width="2.6" stroke-linecap="round"/>
<path d="M982.4 342.3 C982.6 344.9 982.3 352.7 983.4 357.9 C984.5 363.2 987.0 369.0 989.3 373.6 C991.5 378.1 994.8 381.7 997.1 385.3 C999.4 388.9 1002.0 391.0 1002.9 395.1 C1003.9 399.2 1002.9 409.1 1002.9 409.9 C1002.9 410.8 1002.9 401.7 1002.9 400.0" fill="none" stroke="#1e1e1e" stroke-width="5.1" stroke-linecap="round"/>
<path d="M982.4 342.3 C982.6 344.9 982.3 352.7 983.4 357.9 C984.5 363.2 987.0 369.0 989.3 373.6 C991.5 378.1 994.8 381.7 997.1 385.3 C999.4 388.9 1002.0 391.0 1002.9 395.1 C1003.9 399.2 1002.9 409.1 1002.9 409.9 C1002.9 410.8 1002.9 401.7 1002.9 400.0" fill="none" stroke="#b0b0b0" stroke-width="2.6" stroke-linecap="round"/>
<path d="M995.1 383.4 C997.7 382.4 1006.5 380.4 1010.8 377.5 C1015.0 374.6 1017.6 369.7 1020.5 365.8 C1023.5 361.9 1025.4 356.6 1028.4 354.0 C1031.3 351.4 1034.5 350.8 1038.1 350.1 C1041.7 349.5 1047.9 350.1 1049.9 350.1" fill="none" stroke="#1e1e1e" stroke-width="5.1" stroke-linecap="round"/>
<path d="M995.1 383.4 C997.7 382.4 1006.5 380.4 1010.8 377.5 C1015.0 374.6 1017.6 369.7 1020.5 365.8 C1023.5 361.9 1025.4 356.6 1028.4 354.0 C1031.3 351.4 1034.5 350.8 1038.1 350.1 C1041.7 349.5 1047.9 350.1 1049.9 350.1" fill="none" stroke="#b0b0b0" stroke-width="2.6" stroke-linecap="round"/>
<path d="M1069.4 393.1 L1067.5 409.9" fill="none" stroke="#1e1e1e" stroke-width="5.1" stroke-linecap="round"/>
<path d="M1069.4 393.1 L1067.5 409.9" fill="none" stroke="#b0b0b0" stroke-width="2.6" stroke-linecap="round"/>
<path d="M1095.8 370.7 C1095.8 372.3 1095.6 374.1 1095.3 375.7 C1095.0 377.3 1094.6 379.0 1094.0 380.4 C1093.4 381.9 1092.6 383.3 1091.8 384.5 C1091.0 385.7 1090.0 386.7 1089.0 387.6 C1087.9 388.4 1086.8 389.1 1085.7 389.5 C1084.5 390.0 1083.3 390.2 1082.1 390.2 C1080.9 390.2 1079.7 390.0 1078.6 389.5 C1077.4 389.1 1076.3 388.4 1075.3 387.6 C1074.3 386.7 1073.3 385.7 1072.4 384.5 C1071.6 383.3 1070.9 381.9 1070.3 380.4 C1069.7 379.0 1069.2 377.3 1068.9 375.7 C1068.6 374.1 1068.4 372.3 1068.4 370.7 C1068.4 369.0 1068.6 367.2 1068.9 365.6 C1069.2 364.0 1069.7 362.3 1070.3 360.9 C1070.9 359.4 1071.6 358.0 1072.4 356.8 C1073.3 355.6 1074.3 354.6 1075.3 353.7 C1076.3 352.9 1077.4 352.2 1078.6 351.8 C1079.7 351.3 1080.9 351.1 1082.1 351.1 C1083.3 351.1 1084.5 351.3 1085.7 351.8 C1086.8 352.2 1087.9 352.9 1089.0 353.7 C1090.0 354.6 1091.0 355.6 1091.8 356.8 C1092.6 358.0 1093.4 359.4 1094.0 360.9 C1094.6 362.3 1095.0 364.0 1095.3 365.6 C1095.6 367.2 1095.8 369.0 1095.8 370.7Z" fill="none" stroke="#1e1e1e" stroke-width="8.9"/>
<path d="M1095.8 370.7 C1095.8 372.3 1095.6 374.1 1095.3 375.7 C1095.0 377.3 1094.6 379.0 1094.0 380.4 C1093.4 381.9 1092.6 383.3 1091.8 384.5 C1091.0 385.7 1090.0 386.7 1089.0 387.6 C1087.9 388.4 1086.8 389.1 1085.7 389.5 C1084.5 390.0 1083.3 390.2 1082.1 390.2 C1080.9 390.2 1079.7 390.0 1078.6 389.5 C1077.4 389.1 1076.3 388.4 1075.3 387.6 C1074.3 386.7 1073.3 385.7 1072.4 384.5 C1071.6 383.3 1070.9 381.9 1070.3 380.4 C1069.7 379.0 1069.2 377.3 1068.9 375.7 C1068.6 374.1 1068.4 372.3 1068.4 370.7 C1068.4 369.0 1068.6 367.2 1068.9 365.6 C1069.2 364.0 1069.7 362.3 1070.3 360.9 C1070.9 359.4 1071.6 358.0 1072.4 356.8 C1073.3 355.6 1074.3 354.6 1075.3 353.7 C1076.3 352.9 1077.4 352.2 1078.6 351.8 C1079.7 351.3 1080.9 351.1 1082.1 351.1 C1083.3 351.1 1084.5 351.3 1085.7 351.8 C1086.8 352.2 1087.9 352.9 1089.0 353.7 C1090.0 354.6 1091.0 355.6 1091.8 356.8 C1092.6 358.0 1093.4 359.4 1094.0 360.9 C1094.6 362.3 1095.0 364.0 1095.3 365.6 C1095.6 367.2 1095.8 369.0 1095.8 370.7Z" fill="none" stroke="#b8b8b8" stroke-width="6.5"/>
<path d="M1070.0 373.6 C1070.0 375.4 1069.8 377.2 1069.5 378.9 C1069.1 380.6 1068.6 382.3 1068.0 383.8 C1067.3 385.4 1066.5 386.8 1065.5 388.1 C1064.6 389.4 1063.5 390.5 1062.4 391.4 C1061.2 392.2 1060.0 393.0 1058.7 393.4 C1057.4 393.9 1056.1 394.1 1054.8 394.1 C1053.4 394.1 1052.1 393.9 1050.8 393.4 C1049.5 393.0 1048.3 392.2 1047.1 391.4 C1046.0 390.5 1044.9 389.4 1044.0 388.1 C1043.0 386.8 1042.2 385.4 1041.5 383.8 C1040.9 382.3 1040.4 380.6 1040.0 378.9 C1039.7 377.2 1039.5 375.4 1039.5 373.6 C1039.5 371.8 1039.7 370.0 1040.0 368.3 C1040.4 366.6 1040.9 364.9 1041.5 363.3 C1042.2 361.8 1043.0 360.3 1044.0 359.1 C1044.9 357.8 1046.0 356.7 1047.1 355.8 C1048.3 354.9 1049.5 354.2 1050.8 353.8 C1052.1 353.3 1053.4 353.1 1054.8 353.1 C1056.1 353.1 1057.4 353.3 1058.7 353.8 C1060.0 354.2 1061.2 354.9 1062.4 355.8 C1063.5 356.7 1064.6 357.8 1065.5 359.1 C1066.5 360.3 1067.3 361.8 1068.0 363.3 C1068.6 364.9 1069.1 366.6 1069.5 368.3 C1069.8 370.0 1070.0 371.8 1070.0 373.6Z" fill="none" stroke="#1e1e1e" stroke-width="10.9"/>
<path d="M1070.0 373.6 C1070.0 375.4 1069.8 377.2 1069.5 378.9 C1069.1 380.6 1068.6 382.3 1068.0 383.8 C1067.3 385.4 1066.5 386.8 1065.5 388.1 C1064.6 389.4 1063.5 390.5 1062.4 391.4 C1061.2 392.2 1060.0 393.0 1058.7 393.4 C1057.4 393.9 1056.1 394.1 1054.8 394.1 C1053.4 394.1 1052.1 393.9 1050.8 393.4 C1049.5 393.0 1048.3 392.2 1047.1 391.4 C1046.0 390.5 1044.9 389.4 1044.0 388.1 C1043.0 386.8 1042.2 385.4 1041.5 383.8 C1040.9 382.3 1040.4 380.6 1040.0 378.9 C1039.7 377.2 1039.5 375.4 1039.5 373.6 C1039.5 371.8 1039.7 370.0 1040.0 368.3 C1040.4 366.6 1040.9 364.9 1041.5 363.3 C1042.2 361.8 1043.0 360.3 1044.0 359.1 C1044.9 357.8 1046.0 356.7 1047.1 355.8 C1048.3 354.9 1049.5 354.2 1050.8 353.8 C1052.1 353.3 1053.4 353.1 1054.8 353.1 C1056.1 353.1 1057.4 353.3 1058.7 353.8 C1060.0 354.2 1061.2 354.9 1062.4 355.8 C1063.5 356.7 1064.6 357.8 1065.5 359.1 C1066.5 360.3 1067.3 361.8 1068.0 363.3 C1068.6 364.9 1069.1 366.6 1069.5 368.3 C1069.8 370.0 1070.0 371.8 1070.0 373.6Z" fill="none" stroke="#c6c6c6" stroke-width="8.5"/>
<path d="M1073.3 350.1 L1085.1 346.2 L1104.6 343.9 L1105.6 349.1 L1089.0 351.1 L1077.2 355.0Z" fill="url(#rl)" stroke="#1e1e1e" stroke-width="1.7" stroke-linejoin="round"/>
<path d="M883.7 399.0 C886.3 398.0 893.5 394.4 899.3 393.1 C905.2 391.8 912.4 391.5 918.9 391.2 C925.4 390.9 935.2 391.2 938.4 391.2" fill="none" stroke="#1e1e1e" stroke-width="5.1" stroke-linecap="round"/>
<path d="M883.7 399.0 C886.3 398.0 893.5 394.4 899.3 393.1 C905.2 391.8 912.4 391.5 918.9 391.2 C925.4 390.9 935.2 391.2 938.4 391.2" fill="none" stroke="#b0b0b0" stroke-width="2.6" stroke-linecap="round"/>
<path d="M895.4 381.4 L911.1 379.4 L912.0 374.6 L916.9 381.4 L928.7 387.3 L915.0 389.2 L897.4 391.2Z" fill="url(#rm)" stroke="#1e1e1e" stroke-width="1.7" stroke-linejoin="round"/>
<path d="M938.4 397.0 L950.2 396.1 L954.1 409.9 L940.4 409.9Z" fill="#6c6c6c" stroke="#1e1e1e" stroke-width="1.7" stroke-linejoin="round"/>
<path d="M870.0 404.9 L881.7 401.0 L897.4 400.0 L889.6 409.9 L870.0 409.9Z" fill="url(#rw)" stroke="#1e1e1e" stroke-width="1.7" stroke-linejoin="round"/>
<path d="M945.3 390.2 L975.6 387.3 L987.3 379.4 L995.1 384.3 L979.5 393.1 L967.8 403.9 L965.8 398.0 L958.0 399.0 L946.2 397.0Z" fill="url(#rl)" stroke="#1e1e1e" stroke-width="1.7" stroke-linejoin="round"/>
<path d="M785.0 411.3 L797.7 409.3 L800.6 420.1 L793.8 424.0 L786.0 420.1Z" fill="#9c9c9c" stroke="#1e1e1e" stroke-width="1.7" stroke-linejoin="round"/>
<path d="M852.4 424.0 L872.0 412.3" fill="none" stroke="#1e1e1e" stroke-width="5.1" stroke-linecap="round"/>
<path d="M852.4 424.0 L872.0 412.3" fill="none" stroke="#b0b0b0" stroke-width="2.6" stroke-linecap="round"/>
<path d="M821.1 424.0 L854.4 420.1 L851.4 429.9 L844.6 434.9 L827.0 434.9 L823.1 428.9Z" fill="#9c9c9c" stroke="#1e1e1e" stroke-width="1.7" stroke-linejoin="round"/>
<path d="M793.8 426.0 L821.1 426.9" fill="none" stroke="#1e1e1e" stroke-width="5.1" stroke-linecap="round"/>
<path d="M793.8 426.0 L821.1 426.9" fill="none" stroke="#b0b0b0" stroke-width="2.6" stroke-linecap="round"/>
<path d="M764.4 416.2 L772.3 415.2 L793.8 422.0 L786.0 434.9 L786.0 434.8 L782.0 444.6 L776.2 440.6 L764.4 436.7 L767.4 431.8 L768.4 426.0Z" fill="url(#rw)" stroke="#1e1e1e" stroke-width="1.7" stroke-linejoin="round"/>
<path d="M798.7 317.4 C802.4 316.1 813.5 311.4 821.1 309.6 C828.8 307.8 838.4 306.7 844.6 306.7 C850.8 306.7 854.7 307.8 858.3 309.6 C861.9 311.4 864.8 316.1 866.1 317.4" fill="none" stroke="#1e1e1e" stroke-width="5.1" stroke-linecap="round"/>
<path d="M798.7 317.4 C802.4 316.1 813.5 311.4 821.1 309.6 C828.8 307.8 838.4 306.7 844.6 306.7 C850.8 306.7 854.7 307.8 858.3 309.6 C861.9 311.4 864.8 316.1 866.1 317.4" fill="none" stroke="#b0b0b0" stroke-width="2.6" stroke-linecap="round"/>
<path d="M864.2 316.5 L874.9 325.3 L864.2 327.2 L856.3 326.2Z" fill="url(#rw)" stroke="#1e1e1e" stroke-width="1.7" stroke-linejoin="round"/>
<path d="M707.8 345.8 L731.2 334.1 L766.4 323.3 L797.7 315.5 L800.6 319.4 L770.3 330.2 L735.1 340.9 L711.7 347.8Z" fill="url(#rw)" stroke="#1e1e1e" stroke-width="1.7" stroke-linejoin="round"/>
<path d="M685.3 359.5 C687.1 358.2 691.9 354.0 696.0 351.7 C700.1 349.3 707.4 346.4 709.7 345.4" fill="none" stroke="#1e1e1e" stroke-width="5.1" stroke-linecap="round"/>
<path d="M685.3 359.5 C687.1 358.2 691.9 354.0 696.0 351.7 C700.1 349.3 707.4 346.4 709.7 345.4" fill="none" stroke="#b0b0b0" stroke-width="2.6" stroke-linecap="round"/>
<path d="M780.1 341.1 C784.3 340.7 796.1 339.6 805.5 339.0 C815.0 338.3 831.6 337.3 836.8 337.0" fill="none" stroke="#1e1e1e" stroke-width="5.1" stroke-linecap="round"/>
<path d="M780.1 341.1 C784.3 340.7 796.1 339.6 805.5 339.0 C815.0 338.3 831.6 337.3 836.8 337.0" fill="none" stroke="#b0b0b0" stroke-width="2.6" stroke-linecap="round"/>
<path d="M837.8 331.1 L856.3 328.2 L873.0 327.2 L862.2 336.0 L852.4 342.9 L841.7 344.8 L838.7 339.9Z" fill="#9c9c9c" stroke="#1e1e1e" stroke-width="1.7" stroke-linejoin="round"/>
<path d="M643.2 376.1 L668.7 365.3 L703.8 353.6 L744.9 343.8 L746.9 339.9 L766.4 338.4 L780.1 339.9 L780.1 342.3 L766.4 347.8 L750.8 353.6 L746.9 350.7 L719.5 361.4 L688.2 369.3 L658.9 375.1Z" fill="url(#rw)" stroke="#1e1e1e" stroke-width="1.7" stroke-linejoin="round"/>
<path d="M733.6 296.5 L766.4 298.9 L746.9 319.4 L739.0 308.7 L735.1 302.8Z" fill="url(#rw)" stroke="#1e1e1e" stroke-width="1.7" stroke-linejoin="round"/>
<path d="M876.0 419.1 C874.3 423.7 869.1 439.0 866.2 446.5 C863.2 454.0 859.7 461.1 858.4 464.1" fill="none" stroke="#1e1e1e" stroke-width="5.1" stroke-linecap="round"/>
<path d="M876.0 419.1 C874.3 423.7 869.1 439.0 866.2 446.5 C863.2 454.0 859.7 461.1 858.4 464.1" fill="none" stroke="#b0b0b0" stroke-width="2.6" stroke-linecap="round"/>
<path d="M852.5 425.0 L872.0 413.2" fill="none" stroke="#1e1e1e" stroke-width="5.1" stroke-linecap="round"/>
<path d="M852.5 425.0 L872.0 413.2" fill="none" stroke="#b0b0b0" stroke-width="2.6" stroke-linecap="round"/>
<path d="M821.2 425.9 L854.4 421.1 L850.5 430.8 L848.6 447.4 L836.9 440.6 L829.0 436.7Z" fill="url(#rd)" stroke="#1e1e1e" stroke-width="1.7" stroke-linejoin="round"/>
<path d="M844.7 458.2 L850.5 451.4 L862.3 462.1 L868.1 454.3 L870.1 477.8 L864.2 471.9 L845.7 467.0Z" fill="#6c6c6c" stroke="#1e1e1e" stroke-width="1.7" stroke-linejoin="round"/>
<path d="M803.5 372.2 L815.3 369.3 L822.1 378.1 L815.3 386.9 L804.5 384.9 L803.5 372.2 M803.5 372.2 L798.7 365.3 M804.5 384.9 L794.8 390.8 M815.3 386.9 L817.2 396.6 M822.1 378.1 L834.8 375.1 M834.8 375.1 L840.7 364.4 L852.4 363.4 L855.4 373.2 L849.5 384.9 L837.8 384.9 L834.8 375.1 M840.7 364.4 L836.8 357.1 M852.4 363.4 L857.3 354.6 M849.5 384.9 L856.3 389.8 M855.4 373.2 L866.1 371.2 L872.0 375.1 L880.0 380.0 M866.1 371.2 L865.1 365.3 M894.4 359.9 L900.3 348.2 L909.1 347.2 L912.0 357.9 L906.2 367.7 L897.4 367.7 L894.4 359.9 M900.3 348.2 L902.3 340.7 M909.1 347.2 L915.4 340.7 M912.0 357.9 L914.6 357.9 M887.2 358.9 L894.4 359.9 M897.4 367.7 L888.6 379.4 L880.8 381.4 L873.9 379.4 M888.6 379.4 L894.4 389.2 M880.8 381.4 L875.9 391.2 M881.7 381.4 L889.6 375.5 M873.9 379.4 L871.0 373.6 M877.8 380.4 L883.7 387.3 " fill="none" stroke="#1a1a1a" stroke-width="2.1" stroke-linecap="round" stroke-linejoin="round"/>
</svg>

<!-- selection filter bar -->
<div class="a bar" style="left:338px;top:185px;width:534px;height:32px"></div>
<div class="t" style="left:343px;top:194px;color:#fff;letter-spacing:-0.04px">Selection filter</div>
<div class="wbox" style="left:424px;top:190px;width:212px;height:22px"></div>
<svg style="left:429px;top:193px" width="17" height="17" viewBox="0 0 17 17"><circle cx="6" cy="6" r="4.8" fill="url(#ggray)" stroke="#667" stroke-width="0.7"/><circle cx="11.5" cy="11" r="3.6" fill="url(#ggray)" stroke="#667" stroke-width="0.7"/><path d="M3 12 L7.5 13.5" stroke="#667" stroke-width="1.6"/></svg>
<div class="t dk" style="left:448px;top:193px;letter-spacing:-0.01px">Atoms and bonds</div>
<svg style="left:612px;top:196px" width="13" height="10" viewBox="0 0 13 10"><path d="M0.5 0.5 H12.5 L6.5 9.5 Z" fill="#4d7ab0"/></svg>
<svg style="left:645px;top:189px" width="24" height="24" viewBox="0 0 24 24"><path d="M0.8 7 V0.8 H7 M17 0.8 H23.2 V7 M23.2 17 V23.2 H17 M7 23.2 H0.8 V17" fill="none" stroke="#a9c8ee" stroke-width="1.6"/><g stroke="#45607f" stroke-width="0.7"><circle cx="8.5" cy="7.5" r="4.2" fill="url(#gball)"/><circle cx="16" cy="11" r="4.2" fill="url(#gball)"/><circle cx="8.5" cy="16.5" r="4.2" fill="url(#gball)"/></g></svg>
<svg style="left:678px;top:189px" width="24" height="24" viewBox="0 0 24 24"><use href="#dbr"/><path d="M8 8 L16 16 M16 8 L8 16" stroke="#6b7a8e" stroke-width="2.6"/></svg>
<svg style="left:711px;top:189px" width="24" height="24" viewBox="0 0 24 24"><use href="#dbr"/><path d="M12 4.5 L19 12 H15 V19 H9 V12 H5 Z" fill="#6b7a8e"/></svg>
<svg style="left:744px;top:189px" width="24" height="24" viewBox="0 0 24 24"><use href="#dbr"/><path d="M6 5 L11 12 L18 6 M11 12 L15 19" stroke="#6b7a8e" stroke-width="1.5" fill="none"/><circle cx="6" cy="5" r="2" fill="#6b7a8e"/><circle cx="18" cy="6" r="2" fill="#6b7a8e"/><circle cx="11" cy="12" r="3" fill="#6b7a8e"/><circle cx="15" cy="19" r="2.4" fill="#6b7a8e"/></svg>
<svg style="left:777px;top:189px" width="24" height="24" viewBox="0 0 24 24"><use href="#dbr"/><path d="M5 10 C8 7 10 7 12 9 C14 11 16 10.5 19 8 M5 16 C8 13 10 13 12 15 C14 17 16 16.5 19 14" stroke="#6b7a8e" stroke-width="2" fill="none"/></svg>
<svg style="left:810px;top:189px" width="24" height="24" viewBox="0 0 24 24"><use href="#dbr"/><g fill="#6b7a8e"><circle cx="9" cy="8" r="4"/><circle cx="14.5" cy="8.5" r="3.6"/><circle cx="8" cy="14" r="4"/><circle cx="13" cy="14" r="3.4"/><path d="M14 16 H18 V12 H20.5 V16 H24 V18.5 H20.5 V22 H18 V18.5 H14 Z" stroke="#304054" stroke-width="0.6"/></g></svg>
<svg style="left:845px;top:191px" width="21" height="21" viewBox="0 0 20 20"><use href="#mag"/></svg>

<!-- quick access bar -->
<div class="a bar" style="left:978px;top:185px;width:400px;height:32px"></div>
<div class="t" style="left:984px;top:194px;color:#fff;letter-spacing:-0.25px">Quick access</div>
<svg style="left:1063px;top:190px" width="22" height="22" viewBox="0 0 22 22"><circle cx="11" cy="11" r="9.6" fill="none" stroke="#a9c8ee" stroke-width="1.1"/><circle cx="11" cy="11" r="7" fill="none" stroke="#a9c8ee" stroke-width="0.9"/><path d="M11 11 V4 M11 11 L5 15 M11 11 L17 15" stroke="#a9c8ee" stroke-width="1.3"/><circle cx="11" cy="11" r="1.8" fill="#a9c8ee"/></svg>
<svg style="left:1093px;top:189px" width="26" height="24" viewBox="0 0 26 24"><path d="M4 5 L13 8 L21 3 M13 8 L6 17" stroke="#c9daf0" stroke-width="1.4"/><g stroke="#45607f" stroke-width="0.6"><circle cx="4" cy="5" r="2.6" fill="url(#gball)"/><circle cx="21" cy="3.5" r="2.6" fill="url(#gball)"/><circle cx="13" cy="8" r="3.4" fill="url(#gball)"/><circle cx="6" cy="17" r="4.6" fill="url(#gball)"/></g><path d="M19 11 V21 M14 16 H24" stroke="#fff" stroke-width="3"/></svg>
<svg style="left:1127px;top:189px" width="24" height="24" viewBox="0 0 24 24"><g stroke-linecap="round"><path d="M9 3.5 L4.5 20" stroke="#54657c" stroke-width="5"/><path d="M9 3.5 L5 18.5" stroke="#9dbfe8" stroke-width="3"/><path d="M19 3.5 L14.5 20" stroke="#54657c" stroke-width="5"/><path d="M19 3.5 L15 18.5" stroke="#9dbfe8" stroke-width="3"/></g></svg>
<svg style="left:1158px;top:188px" width="26" height="26" viewBox="0 0 26 26"><circle cx="7" cy="19" r="5.2" fill="url(#gball)" stroke="#45607f" stroke-width="0.6"/><text x="9.5" y="11.5" font-family="Liberation Sans, sans-serif" font-size="12" fill="#fff">2</text><path d="M17.5 6.5 H24 M20.75 3.2 V9.8" stroke="#fff" stroke-width="1.4"/></svg>
<div class="t b" style="left:1191px;top:191px;font-size:15.5px;color:#e9eef4;line-height:20px;height:20px">+H</div>
<div class="t b" style="left:1224px;top:191px;font-size:15.5px;color:#e9eef4;line-height:20px;height:20px">−H</div>
<svg style="left:1254px;top:190px" width="24" height="22" viewBox="0 0 24 22"><path d="M1 9 C6 10 8 18 12 18 C16 18 18 10 23 9" fill="none" stroke="#a9c8ee" stroke-width="1.3"/><path d="M7 2.5 C11 1.5 13.5 4 13 9" fill="none" stroke="#fff" stroke-width="1.6"/><path d="M9.5 8 L13 13 L16.5 8 Z" fill="#fff"/></svg>
<svg style="left:1285px;top:188px" width="27" height="27" viewBox="0 0 27 27"><use href="#ytrio" x="0" y="0" width="24" height="24"/><path d="M19.5 13 V25 M13.5 19 H25.5" stroke="#1c2838" stroke-width="5"/><path d="M19.5 14 V24 M14.5 19 H24.5" stroke="#fff" stroke-width="3"/></svg>
<svg style="left:1317px;top:188px" width="27" height="27" viewBox="0 0 27 27"><use href="#ytrio" x="0" y="0" width="20" height="22"/><use href="#ytrio" x="3" y="1" width="20" height="22"/><use href="#ytrio" x="6" y="2" width="20" height="22"/><path d="M20.5 13 V25 M14.5 19 H26.5" stroke="#1c2838" stroke-width="5"/><path d="M20.5 14 V24 M15.5 19 H25.5" stroke="#fff" stroke-width="3"/></svg>
<svg style="left:1349px;top:188px" width="27" height="27" viewBox="0 0 27 27"><use href="#gear" x="0" y="7" width="17" height="17"/><use href="#gear" x="13" y="0" width="12" height="12"/><path d="M20.5 13 V25 M14.5 19 H26.5" stroke="#1c2838" stroke-width="5"/><path d="M20.5 14 V24 M15.5 19 H25.5" stroke="#fff" stroke-width="3"/></svg>

<!-- left mini toolbar -->
<div class="a bar" style="left:338px;top:384px;width:32px;height:96px"></div>
<div class="t c" style="left:338px;width:32px;top:386px;font-size:12.5px;color:#fff">PDB</div>
<svg style="left:343px;top:400px" width="22" height="11" viewBox="0 0 22 11"><path d="M1 4 V9.5 H21 V4" fill="none" stroke="#fff" stroke-width="1.5"/><path d="M9.5 0 H12.5 V3 H15 L11 7 L7 3 H9.5 Z" fill="#fff"/></svg>
<svg style="left:341px;top:418px" width="26" height="28" viewBox="0 0 26 28"><path d="M7 11 C10 8 14 9 17 8.5 C22 8 24 13 23.5 18 C23 23 23 25 18 25.5 C13 26 11 27.5 7.5 25.5 C3.5 23 2 20 3.5 17 C5 14.5 5 13 7 11 Z" fill="#2fce8a" stroke="#1c2838" stroke-width="0.8"/><rect x="9.5" y="1.5" width="4" height="7" rx="1.8" fill="#f0a040" transform="rotate(25 11.5 5)"/><rect x="18" y="2" width="5" height="3" rx="1.4" fill="#a9c8ee" transform="rotate(20 20 3)"/><rect x="2" y="7" width="3.5" height="6" rx="1.6" fill="#e86a8a" transform="rotate(-20 3.5 10)"/><path d="M11 10 L14 8.5 L16 12 L12.5 13.5 Z" fill="#e8c83a"/></svg>
<div class="t c b" style="left:338px;width:32px;top:451px;font-size:12.5px;color:#fff">Gro</div>
<svg style="left:343px;top:464px" width="23" height="14" viewBox="0 0 23 14"><path d="M5 2 L6 5.5 L9.5 6.5 L6 7.5 L5 11 L4 7.5 L0.5 6.5 L4 5.5 Z M11.5 0.5 L12.2 2.8 L14.5 3.5 L12.2 4.2 L11.5 6.5 L10.8 4.2 L8.5 3.5 L10.8 2.8 Z M10.5 8 L11.1 9.9 L13 10.5 L11.1 11.1 L10.5 13 L9.9 11.1 L8 10.5 L9.9 9.9 Z" fill="#f0c030"/><path d="M15 1.5 L21.5 13" stroke="#a9c8ee" stroke-width="3"/><path d="M14 0 L16.5 4" stroke="#fff" stroke-width="3"/></svg>

<!-- nav cube -->
<svg style="left:336px;top:536px" width="146" height="148" viewBox="0 0 146 148"><g fill="#6d92c0"><path d="M71 3 L77 14 H65 Z"/><path d="M71 145 L77 134 H65 Z"/><path d="M5 72 L16 66 V78 Z"/><path d="M142 72 L131 66 V78 Z"/><path d="M55 9 C43 12 33 18 26 26 L22 22.5 L22 34 L33 33.5 L29.5 29.5 C36 22 45 17 56 13.5 Z"/><path d="M88 9 C100 12 110 18 117 26 L121 22.5 L121 34 L110 33.5 L113.500 29.5 C107 22 98 17 87 13.5 Z"/></g><g transform="rotate(14 72 72)" opacity="0.92"><rect x="42" y="38" width="58" height="68" rx="12" fill="#48688f"/><rect x="47" y="44" width="48" height="56" rx="5" fill="#608abb"/><path d="M38.500 48 V98 M103.500 48 V98" stroke="#48688f" stroke-width="1.300"/><path d="M45 40 L55 38 L50 49 Z M97 40 L87 38 L92 49 Z M45 104 L55 106 L50 95 Z M97 104 L87 106 L92 95 Z" fill="#8fb6e4" opacity="0.600"/></g><path d="M72 62 L76 65 L76 74 L73 72 Z" fill="#3fbf4f"/><path d="M25 61 L34 55 L34 59 L47 63.500 L45.500 68.500 L32.500 64 L31 68 Z" fill="#4a90e2"/><path d="M61 105 L66 106.500 L63.500 118 L67 119 L59.500 130 L55.500 116 L59 117 Z" fill="#f09048"/></svg>

<!-- bottom toolbar -->
<div class="a bar" style="left:611px;top:646px;width:495px;height:32px"></div>
<div class="a" style="left:616px;top:650px;width:22px;height:23px;border:1px solid #a9c8ee;background:#263346"></div>
<svg style="left:618px;top:652px" width="19" height="19" viewBox="0 0 20 20"><use href="#mag"/></svg>
<svg style="left:648px;top:650px" width="24" height="23" viewBox="0 0 24 23"><path d="M0.8 6.5 V0.8 H7 M17 0.8 H23.2 V6.5 M23.2 16.5 V22.2 H17 M7 22.2 H0.8 V16.5" fill="none" stroke="#a9c8ee" stroke-width="1.4"/><use href="#mag" x="3" y="2.5" width="19" height="19"/></svg>
<svg style="left:683px;top:652px" width="19" height="19" viewBox="0 0 20 20"><use href="#mag"/><path d="M4 8 H12 M8 4 V12" stroke="#fff" stroke-width="2.2"/></svg>
<svg style="left:716px;top:652px" width="19" height="19" viewBox="0 0 20 20"><use href="#mag"/><path d="M4 8 H12" stroke="#fff" stroke-width="2.2"/></svg>
<div class="a" style="left:748px;top:651px;width:23px;height:22px;border-radius:3px;border:1px solid #1c2838;background:linear-gradient(180deg,#53709a,#86abd8)"></div>
<div class="a" style="left:777px;top:647px;width:31px;height:30px;background:#4a5d78"></div>
<svg style="left:780px;top:648px" width="26" height="28" viewBox="0 0 26 28"><path d="M13 1 L23 6 L24.5 20 L13 27 L1.5 20 L3 6 Z" fill="#5a8ccc" stroke="#2d4a70" stroke-width="0.8"/><path d="M13 1 L23 6 L13 11 L3 6 Z" fill="#7daae2"/><path d="M13 11 V27 M3 6 L13 11 L23 6" stroke="#2d4a70" stroke-width="0.8" fill="none"/><path d="M7.5 13 L11 15 L7.5 18 Z M18.5 13 L15 15 L18.5 18 Z" fill="#1c2838"/><path d="M1 24 L6 19.5 L7 21.5 Z" fill="#f07030"/><path d="M25 24 L20 19.5 L19 21.5 Z" fill="#30c060"/><path d="M13 0 L15 3 H11 Z" fill="#3a7ae0"/></svg>
<svg style="left:813px;top:651px" width="24" height="22" viewBox="0 0 24 22"><path d="M4 1 H20 L23 21 H1 Z" fill="#7f9cc0" stroke="#1c2838" stroke-width="0.8"/><path d="M12 1 V21 M2.5 10 H21.5" stroke="#9fd0a8" stroke-width="0.8"/></svg>
<div class="t b" style="left:847px;top:651px;font-size:16px;line-height:20px;height:20px;color:#fff;letter-spacing:-0.8px">1Å</div>
<div class="a" style="left:848px;top:670px;width:20px;height:2px;background:#fff"></div>
<svg style="left:879px;top:650px" width="23" height="24" viewBox="0 0 28 28" preserveAspectRatio="none"><use href="#cam" x="7.5" y="0" width="13" height="10"/><use href="#ring" x="0" y="11" width="28" height="15"/></svg>
<svg style="left:914px;top:651px" width="22" height="23" viewBox="0 0 22 23"><use href="#cam" x="0" y="1" width="19" height="14.5"/><use href="#floppy" x="9" y="9.5" width="12.5" height="12.5"/></svg>
<svg style="left:945px;top:650px" width="24" height="24" viewBox="0 0 24 24"><rect x="8.5" y="1" width="14.5" height="14" fill="#a9c8ee" stroke="#1c2838" stroke-width="0.7"/><path d="M10.5 4 H21 M10.5 6.5 H21 M10.5 9 H21 M10.5 11.5 H21" stroke="#4d7ab0" stroke-width="1"/><path d="M8.5 15 L4.5 19" stroke="#fff" stroke-width="1"/><circle cx="4.2" cy="19.5" r="3" fill="#d8d4d4" stroke="#1c2838" stroke-width="0.7"/></svg>
<svg style="left:980px;top:652px" width="21" height="20" viewBox="0 0 21 20"><rect x="0.5" y="0.5" width="20" height="19" fill="#a9c8ee" stroke="#1c2838" stroke-width="0.8"/><rect x="2.5" y="5" width="16" height="6.5" fill="#6f98c8"/><path d="M2.5 3 H18.5 M2.5 14 H18.5 M2.5 16.5 H18.5" stroke="#4d7ab0" stroke-width="1"/></svg>
<svg style="left:1012px;top:654px" width="22" height="15" viewBox="0 0 22 15"><path d="M1 7.5 C5 1.5 17 1.5 21 7.5 C17 13.5 5 13.5 1 7.5 Z" fill="#e9eef4" stroke="#1c2838" stroke-width="0.8"/><circle cx="11" cy="7.5" r="4.2" fill="#1c2838"/><circle cx="11" cy="7.5" r="1.8" fill="#e9eef4"/></svg>
<svg style="left:1046px;top:653px" width="19" height="18" viewBox="0 0 19 18"><g fill="#a9c8ee" stroke="#1c2838" stroke-width="0.5"><path d="M1 1 H7 L5 3 L8 6 L6 8 L3 5 L1 7 Z"/><path d="M18 1 H12 L14 3 L11 6 L13 8 L16 5 L18 7 Z"/><path d="M1 17 H7 L5 15 L8 12 L6 10 L3 13 L1 11 Z"/><path d="M18 17 H12 L14 15 L11 12 L13 10 L16 13 L18 11 Z"/></g></svg>
<svg style="left:1081px;top:653px" width="16" height="17" viewBox="0 0 16 17"><path d="M1.5 1 L15 8.5 L1.5 16 Z" fill="#fff" stroke="#111" stroke-width="1.2"/></svg>



<!-- ===== ANIMATOR ===== -->
<div class="a" style="left:0;top:684px;width:1382px;height:4px;background:#304054"></div>
<div class="a tb" style="left:0;top:688px;width:1382px;height:31px"></div>
<svg style="left:1px;top:692px" width="26" height="23" viewBox="0 0 18 16" preserveAspectRatio="none"><use href="#clap"/></svg>
<div class="t b" style="left:39px;top:697px;color:#fff;letter-spacing:-0.14px">Animator - Presentation 1</div>
<svg style="left:1340px;top:697px" width="32" height="14" viewBox="0 0 32 14"><path d="M0.5 6.5 H7" fill="none" stroke="#6f98c8" stroke-width="1.6"/><path d="M12.5 1 V12" stroke="#6f98c8" stroke-width="1.6"/><rect x="7" y="3" width="5.5" height="7" fill="#6f98c8"/><path d="M20.5 1 L31.5 12 M31.5 1 L20.5 12" stroke="#6f98c8" stroke-width="1.6"/></svg>
<div class="a" style="left:0;top:719px;width:984px;height:227px;background:#304054"></div>
<div class="a" style="left:4px;top:719px;width:980px;height:202px;background:#1c2838"></div>
<div class="a" style="left:4px;top:776px;width:960px;height:145px;background:#1f2b3b"></div>
<div class="a" style="left:255px;top:748px;width:709px;height:28px;background:#212d3d"></div>
<svg style="left:19px;top:722px" width="20" height="21" viewBox="0 0 20 21"><path d="M6.500 3 V20.500 M11.500 3 V20.500 M16.500 3 V20.500 M1 8.500 H19.500 M1 13.500 H19.500 M1 18.500 H19.500" stroke="#c8d4e0" stroke-width="1.100"/><path d="M9.600 3.600 L5.400 7.800 A3.100 3.100 0 0 1 1 3.400 L4.500 0.600" fill="none" stroke="#1c2838" stroke-width="3.400"/><path d="M9.600 3.600 L5.400 7.800 A3.100 3.100 0 0 1 1 3.400 L4.500 0.600" fill="none" stroke="#a9c8ee" stroke-width="1.800"/></svg>
<div class="t" style="left:42px;top:726px;color:#fff">Off</div>
<svg style="left:76px;top:733px" width="10" height="6" viewBox="0 0 10 6"><path d="M0.5 0.5 H9.5 L5 5.5 Z" fill="#e9eef4"/></svg>
<svg style="left:94px;top:722px" width="21" height="21" viewBox="0 0 21 21"><path d="M1.500 19.500 H19 A17 17 0 0 0 13 9 Z" fill="#c8d6ea" stroke="#1c2838" stroke-width="0.800"/><path d="M1 20.300 H19.500" stroke="#8fa6c4" stroke-width="1.200"/><path d="M12.600 3.600 L8.400 7.800 A3.100 3.100 0 0 1 4 3.400 L7.500 0.600" fill="none" stroke="#1c2838" stroke-width="3.400"/><path d="M12.600 3.600 L8.400 7.800 A3.100 3.100 0 0 1 4 3.400 L7.500 0.600" fill="none" stroke="#a9c8ee" stroke-width="1.800"/></svg>
<div class="t" style="left:119px;top:726px;color:#fff">Off</div>
<svg style="left:152px;top:733px" width="10" height="6" viewBox="0 0 10 6"><path d="M0.5 0.5 H9.5 L5 5.5 Z" fill="#e9eef4"/></svg>
<svg style="left:178px;top:723px" width="22" height="20" viewBox="0 0 22 20"><path d="M1 5 L21 1.8 V4.6 L1 7.8 Z" fill="#e9eef4" stroke="#1c2838" stroke-width="0.6"/><rect x="1" y="8.2" width="20" height="3" fill="#e9eef4" stroke="#1c2838" stroke-width="0.6"/><rect x="1" y="11.2" width="20" height="8" fill="#a9c8ee" stroke="#1c2838" stroke-width="0.6"/><path d="M9 12.5 L14 15.2 L9 18 Z" fill="#fff" stroke="#1c2838" stroke-width="0.6"/><path d="M11.5 0.5 V9.5 M7 5 H16" stroke="#1c2838" stroke-width="3.6"/><path d="M11.5 1 V9 M7.5 5 H15.5" stroke="#fff" stroke-width="2"/></svg>
<div class="wbox" style="left:212px;top:720px;width:77px;height:25px"></div>
<div class="t dk" style="left:216px;top:725px;letter-spacing:-0.30px">Loop</div>
<svg style="left:265px;top:728px" width="13" height="10" viewBox="0 0 13 10"><path d="M0.5 0.5 H12.5 L6.5 9.5 Z" fill="#4d7ab0"/></svg>
<div class="a" style="left:289px;top:720px;width:84px;height:25px;background:#4d7ab0"></div>
<div class="wbox" style="left:373px;top:720px;width:50px;height:25px"></div>
<div class="t dk c" style="left:373px;width:40px;top:725px">1</div>
<div class="a" style="left:423px;top:720px;width:84px;height:25px;background:#4d7ab0"></div>
<svg style="left:296px;top:726px" width="14" height="13" viewBox="0 0 14 13"><path d="M3 1.5 V11.5" stroke="#1c2838" stroke-width="3.4"/><path d="M12 1.5 L4.5 6.5 L12 11.5 Z" fill="#fff" stroke="#1c2838" stroke-width="1.1"/><path d="M3 1.5 V11.5" stroke="#fff" stroke-width="1.8"/></svg>
<svg style="left:324px;top:726px" width="14" height="13" viewBox="0 0 14 13"><path d="M11.5 2 L3 6.5 L11.5 11" fill="none" stroke="#1c2838" stroke-width="3.6"/><path d="M11.5 2 L3 6.5 L11.5 11" fill="none" stroke="#fff" stroke-width="1.8"/></svg>
<svg style="left:352px;top:726px" width="14" height="13" viewBox="0 0 14 13"><path d="M11 1.5 L3 6.5 L11 11.5 Z" fill="#fff" stroke="#1c2838" stroke-width="1.1"/></svg>
<svg style="left:429px;top:726px" width="14" height="13" viewBox="0 0 14 13"><path d="M3 1.5 L11 6.5 L3 11.5 Z" fill="#fff" stroke="#1c2838" stroke-width="1.1"/></svg>
<svg style="left:458px;top:726px" width="14" height="13" viewBox="0 0 14 13"><path d="M2.5 2 L11 6.5 L2.5 11" fill="none" stroke="#1c2838" stroke-width="3.6"/><path d="M2.5 2 L11 6.5 L2.5 11" fill="none" stroke="#fff" stroke-width="1.8"/></svg>
<svg style="left:485px;top:726px" width="14" height="13" viewBox="0 0 14 13"><path d="M11 1.5 V11.5" stroke="#1c2838" stroke-width="3.4"/><path d="M2 1.5 L9.5 6.5 L2 11.5 Z" fill="#fff" stroke="#1c2838" stroke-width="1.1"/><path d="M11 1.5 V11.5" stroke="#fff" stroke-width="1.8"/></svg>
<div class="wbox" style="left:507px;top:720px;width:79px;height:25px"></div>
<div class="t dk" style="left:513px;top:725px;letter-spacing:-0.60px">0,030 s</div>
<div class="a" style="left:567px;top:720px;width:18px;height:12px;background:#4d7ab0"></div>
<div class="a" style="left:567px;top:733px;width:18px;height:12px;background:#4d7ab0"></div>
<svg style="left:572px;top:723px" width="8" height="19" viewBox="0 0 8 19"><path d="M0.5 5.5 L4 0.5 L7.5 5.5 Z M0.5 13.5 L4 18.5 L7.5 13.5 Z" fill="#fff"/></svg>
<svg style="left:598px;top:722px" width="24" height="22" viewBox="0 0 24 22"><rect x="0.5" y="0.5" width="22" height="15" fill="#a9c8ee" stroke="#1c2838" stroke-width="0.7"/><path d="M0.5 2 H22.5 M0.5 14 H22.5" stroke="#e9eef4" stroke-width="2.6" stroke-dasharray="3 2"/><path d="M9.5 4.5 L15 8 L9.5 11.5 Z" fill="#fff" stroke="#1c2838" stroke-width="0.7"/><use href="#floppy" x="12.5" y="10.5" width="11" height="11"/></svg>
<div class="a" style="left:634px;top:722px;width:22px;height:22px;border:1px solid #8fb6e4;background:#2a3a50"></div>
<svg style="left:636px;top:724px" width="19" height="19" viewBox="0 0 20 20"><use href="#mag"/></svg>
<svg style="left:662px;top:724px" width="19" height="19" viewBox="0 0 20 20"><use href="#mag"/><path d="M4.5 8 H11.5 M8 4.5 V11.5" stroke="#4a5e7a" stroke-width="1.8"/></svg>
<svg style="left:688px;top:724px" width="19" height="19" viewBox="0 0 20 20"><use href="#mag"/><path d="M4.5 8 H11.5" stroke="#4a5e7a" stroke-width="1.8"/></svg>
<div class="t" style="left:720px;top:726px;color:#fff;letter-spacing:-0.36px">Begin</div>
<div class="wbox" style="left:760px;top:720px;width:68px;height:25px"></div>
<div class="t dk" style="left:760px;width:41px;top:725px;text-align:right">1</div>
<div class="a" style="left:810px;top:720px;width:18px;height:12px;background:#4d7ab0"></div>
<div class="a" style="left:810px;top:733px;width:18px;height:12px;background:#4d7ab0"></div>
<svg style="left:815px;top:723px" width="8" height="19" viewBox="0 0 8 19"><path d="M0.5 5.5 L4 0.5 L7.5 5.5 Z M0.5 13.5 L4 18.5 L7.5 13.5 Z" fill="#fff"/></svg>
<div class="t" style="left:838px;top:726px;color:#fff;letter-spacing:-0.60px">End</div>
<div class="wbox" style="left:868px;top:720px;width:68px;height:25px"></div>
<div class="t dk" style="left:868px;width:41px;top:725px;text-align:right">180</div>
<div class="a" style="left:918px;top:720px;width:18px;height:12px;background:#4d7ab0"></div>
<div class="a" style="left:918px;top:733px;width:18px;height:12px;background:#4d7ab0"></div>
<svg style="left:923px;top:723px" width="8" height="19" viewBox="0 0 8 19"><path d="M0.5 5.5 L4 0.5 L7.5 5.5 Z M0.5 13.5 L4 18.5 L7.5 13.5 Z" fill="#fff"/></svg>
<svg style="left:948px;top:722px" width="22" height="22" viewBox="0 0 20 20"><use href="#gear"/></svg>
<div class="t c" style="left:-10.3px;width:40px;top:754px;color:#cdd6e1">-60</div>
<div class="t c" style="left:66.7px;width:40px;top:754px;color:#cdd6e1">-40</div>
<div class="t c" style="left:143.6px;width:40px;top:754px;color:#cdd6e1">-20</div>
<div class="t c" style="left:297.1px;width:40px;top:754px;color:#cdd6e1">20</div>
<div class="t c" style="left:374.1px;width:40px;top:754px;color:#cdd6e1">40</div>
<div class="t c" style="left:451.1px;width:40px;top:754px;color:#cdd6e1">60</div>
<div class="t c" style="left:528.2px;width:40px;top:754px;color:#cdd6e1">80</div>
<div class="t c" style="left:605.2px;width:40px;top:754px;color:#cdd6e1">100</div>
<div class="t c" style="left:682.2px;width:40px;top:754px;color:#cdd6e1">120</div>
<div class="t c" style="left:759.1px;width:40px;top:754px;color:#cdd6e1">140</div>
<div class="t c" style="left:836.1px;width:40px;top:754px;color:#cdd6e1">160</div>
<div class="t c" style="left:913.1px;width:40px;top:754px;color:#cdd6e1">180</div>
<div class="a" style="left:244px;top:776px;width:689px;height:145px;background:#2f3e52"></div>
<svg style="left:0;top:776px" width="964" height="145" viewBox="0 0 964 145"><path d="M4 20.5 H933 M4 40.5 H933 M4 60.5 H933 M4 80.5 H933 M4 100.5 H933 M4 119.5 H933 M4 139.5 H933 " stroke="#28364a" stroke-width="1" fill="none"/><path d="M48.5 0 V145 M125.5 0 V145 M202.5 0 V145 M279.5 0 V145 M356.5 0 V145 M433.5 0 V145 M510.5 0 V145 M587.5 0 V145 M664.5 0 V145 M741.5 0 V145 M818.5 0 V145 M895.5 0 V145 " stroke="#27354a" stroke-width="1" fill="none"/><path d="M9.5 0 V145 M86.5 0 V145 M163.5 0 V145 M240.5 0 V145 M317.5 0 V145 M394.5 0 V145 M471.5 0 V145 M548.5 0 V145 M625.5 0 V145 M702.5 0 V145 M779.5 0 V145 M856.5 0 V145 M933.5 0 V145 " stroke="#192433" stroke-width="1" fill="none"/><path d="M243.5 0 V145" stroke="#4d7ab0" stroke-width="1.6"/></svg>
<div class="a" style="left:233px;top:748px;width:22px;height:28px;border-radius:4px;background:#4d7ab0"></div>
<div class="t c" style="left:233px;width:22px;top:754px;color:#fff">1</div>
<div class="a" style="left:964px;top:748px;width:18px;height:173px;background:#1e2b3b"></div>
<div class="a" style="left:964px;top:748px;width:18px;height:18px;background:#4d7ab0"></div>
<div class="a" style="left:964px;top:767px;width:18px;height:30px;background:#4d7ab0"></div>
<div class="a" style="left:964px;top:903px;width:18px;height:18px;background:#4d7ab0"></div>
<svg style="left:967px;top:752px" width="12" height="10" viewBox="0 0 12 10"><path d="M0.5 9.5 L6 0.5 L11.5 9.5 Z" fill="#fff"/></svg>
<svg style="left:967px;top:907px" width="12" height="10" viewBox="0 0 12 10"><path d="M0.5 0.5 L6 9.5 L11.5 0.5 Z" fill="#fff"/></svg>
<div class="a" style="left:4px;top:923px;width:958px;height:18px;background:#1e2b3b"></div>
<div class="a" style="left:4px;top:923px;width:18px;height:18px;background:#4d7ab0"></div>
<div class="a" style="left:407px;top:923px;width:148px;height:18px;background:#4d7ab0"></div>
<div class="a" style="left:944px;top:923px;width:18px;height:18px;background:#4d7ab0"></div>
<svg style="left:8px;top:926px" width="10" height="12" viewBox="0 0 10 12"><path d="M9.5 0.5 L0.5 6 L9.5 11.5 Z" fill="#fff"/></svg>
<svg style="left:948px;top:926px" width="10" height="12" viewBox="0 0 10 12"><path d="M0.5 0.5 L9.5 6 L0.5 11.5 Z" fill="#fff"/></svg>
<div class="a" style="left:984px;top:719px;width:3px;height:227px;background:#263345"></div>
<div class="a" style="left:987px;top:719px;width:395px;height:227px;background:#304054"></div>
<div class="a" style="left:994px;top:727px;width:19px;height:19px;background:#a9c8ee;border:1px solid #1c2838"></div>
<div class="t b c" style="left:994px;width:19px;top:729px;font-size:8.5px;color:#111;letter-spacing:-0.3px">A-Z</div>
<svg style="left:1019px;top:726px" width="20" height="20" viewBox="0 0 20 20"><use href="#npath" x="2" y="2.5" width="16" height="16"/><use href="#trio" x="11" y="0" width="8.5" height="8.5"/><use href="#trio" x="0" y="11.5" width="8.5" height="8.5"/></svg>
<svg style="left:1046px;top:728px" width="19" height="15" viewBox="0 0 16 12" preserveAspectRatio="none"><use href="#cam"/></svg>
<svg style="left:1072px;top:726px" width="19" height="19"><use href="#trio" width="19" height="19"/></svg>
<svg style="left:1098px;top:726px;opacity:0.45" width="19" height="19"><use href="#trio" width="19" height="19"/></svg>
<svg style="left:1123px;top:726px" width="20" height="20" viewBox="0 0 20 20"><use href="#trio" x="4.5" y="4.5" width="11" height="11"/><path d="M10 0.5 V3.5 M10 16.5 V19.5 M0.5 10 H3.5 M16.5 10 H19.5 M3 3 L5.2 5.2 M17 3 L14.8 5.2 M3 17 L5.2 14.8 M17 17 L14.8 14.8" stroke="#fff" stroke-width="1.3"/></svg>
<svg style="left:1150px;top:727px" width="19" height="19" viewBox="0 0 20 20"><use href="#gearb"/></svg>
<div class="wbox" style="left:1182px;top:723px;width:193px;height:26px"></div>
<div class="t" style="left:1188px;top:729px;color:#6a6a6a;letter-spacing:-0.18px">Search animations... (Ctrl+S...</div>
<svg style="left:1353px;top:727px" width="18" height="18" viewBox="0 0 20 20"><use href="#mag"/></svg>
<div class="t c" style="left:984px;width:80px;top:812px;color:#fff;letter-spacing:-0.21px">Assemble</div>
<div class="t c" style="left:1055px;width:80px;top:812px;color:#fff;letter-spacing:-0.34px">Disassemble</div>
<div class="t c" style="left:1126px;width:80px;top:812px;color:#fff;letter-spacing:-0.21px">Dock</div>
<div class="t c" style="left:1196px;width:80px;top:812px;color:#fff;letter-spacing:0.13px">Hold atoms</div>
<div class="t c" style="left:1267px;width:80px;top:812px;color:#fff">Move ato...</div>
<div class="t c" style="left:984px;width:80px;top:883px;color:#fff;letter-spacing:-0.17px">Play path</div>
<div class="t c" style="left:1055px;width:80px;top:883px;color:#fff">Play rever...</div>
<div class="t c" style="left:1126px;width:80px;top:883px;color:#fff">Rock</div>
<div class="t c" style="left:1196px;width:80px;top:883px;color:#fff;letter-spacing:-0.23px">Rotate</div>
<div class="t c" style="left:1267px;width:80px;top:883px;color:#fff;letter-spacing:0.01px">Undock</div>
<svg style="left:1001px;top:761px" width="46" height="47" viewBox="0 0 28 29"><use href="#asm"/></svg>
<svg style="left:1071px;top:761px" width="47" height="47" viewBox="0 0 30 30"><use href="#dasm"/></svg>
<svg style="left:1143px;top:760px" width="46" height="49" viewBox="0 0 30 32"><use href="#icoDock"/></svg>
<svg style="left:1222px;top:762px" width="28" height="45" viewBox="0 0 18 29"><use href="#icoHold"/></svg>
<svg style="left:1285px;top:763px" width="46" height="44" viewBox="0 0 42 40"><use href="#icoMove"/></svg>
<svg style="left:1001px;top:833px" width="46" height="45" viewBox="0 0 44 43"><use href="#icoPlay"/></svg>
<svg style="left:1072px;top:833px" width="46" height="45" viewBox="0 0 44 43"><use href="#icoPlayR"/></svg>
<svg style="left:1143px;top:832px" width="46" height="47" viewBox="0 0 46 47"><use href="#shield" x="8" y="0" width="30" height="33"/><path d="M6 29 C14 39 32 39 40 29" fill="none" stroke="#1c2838" stroke-width="6.4"/><path d="M0.8 31.5 L10 22.5 L12.5 33.5 Z M45.2 31.5 L36 22.5 L33.5 33.5 Z" fill="#fff" stroke="#1c2838" stroke-width="1.2" stroke-linejoin="round"/><path d="M6 29 C14 39 32 39 40 29" fill="none" stroke="#fff" stroke-width="4"/></svg>
<svg style="left:1213px;top:832px" width="46" height="49" viewBox="0 0 28 30"><use href="#icoRotate"/></svg>
<svg style="left:1282px;top:830px" width="47" height="49" viewBox="0 0 31 32"><use href="#icoUndock"/></svg>
<div class="a" style="left:1358px;top:758px;width:18px;height:145px;background:#1e2b3b"></div>
<div class="a" style="left:1358px;top:758px;width:18px;height:18px;background:#4d7ab0"></div>
<div class="a" style="left:1358px;top:777px;width:18px;height:18px;background:#4d7ab0"></div>
<div class="a" style="left:1358px;top:885px;width:18px;height:18px;background:#4d7ab0"></div>
<svg style="left:1361px;top:762px" width="12" height="10" viewBox="0 0 12 10"><path d="M0.5 9.5 L6 0.5 L11.5 9.5 Z" fill="#fff"/></svg>
<svg style="left:1361px;top:889px" width="12" height="10" viewBox="0 0 12 10"><path d="M0.5 0.5 L6 9.5 L11.5 0.5 Z" fill="#fff"/></svg>
<svg style="left:1257px;top:916px" width="18" height="18" viewBox="0 0 20 20"><use href="#mag"/><path d="M4.5 8 H11.5 M8 4.5 V11.5" stroke="#4a5e7a" stroke-width="1.8"/></svg>
<svg style="left:1289px;top:916px" width="18" height="18" viewBox="0 0 20 20"><use href="#mag"/><path d="M4.5 8 H11.5" stroke="#4a5e7a" stroke-width="1.8"/></svg>
<svg style="left:1321px;top:916px" width="19" height="19" viewBox="0 0 19 19"><rect x="0.5" y="0.5" width="18" height="18" fill="#a9c8ee" stroke="#1c2838" stroke-width="0.8"/><path d="M3 4.5 H16 M3 7.5 H16 M3 10.5 H16 M3 13.5 H16" stroke="#4d7ab0" stroke-width="1.2"/></svg>
<svg style="left:1352px;top:916px" width="20" height="19" viewBox="0 0 20 19"><rect x="0.5" y="0.5" width="19" height="18" fill="#a9c8ee" stroke="#1c2838" stroke-width="0.8"/><g fill="#cfe0f4" stroke="#4a6588" stroke-width="0.9"><circle cx="8" cy="6" r="3.2"/><circle cx="5.5" cy="13" r="3.2"/><circle cx="14" cy="9.5" r="3.2"/></g></svg>


</body>
</html>
